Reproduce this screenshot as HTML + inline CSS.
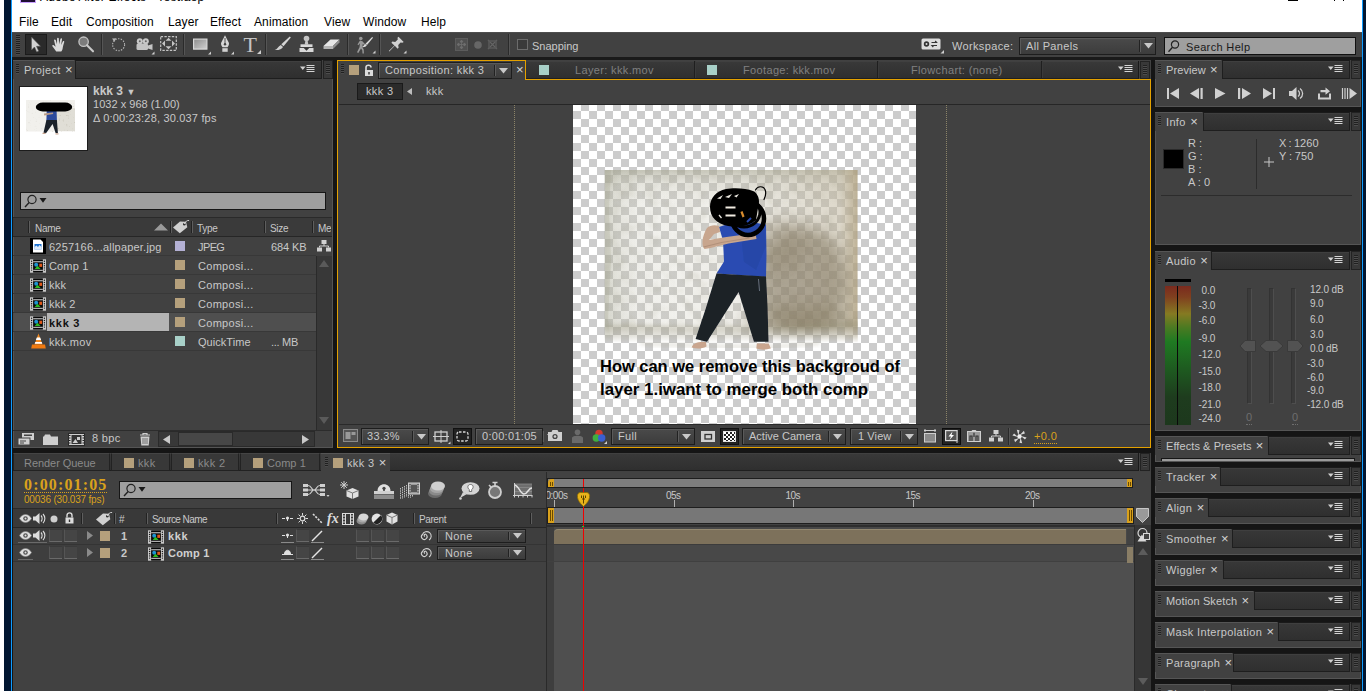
<!DOCTYPE html>
<html><head><meta charset="utf-8"><title>After Effects</title>
<style>
html,body{margin:0;padding:0}
body{width:1366px;height:691px;overflow:hidden;background:#fff;position:relative;font-family:"Liberation Sans",sans-serif;}
div,svg{position:absolute}
svg{overflow:visible}
.t{white-space:nowrap;line-height:14px;font-family:"Liberation Sans",sans-serif}
.w{letter-spacing:.35px}
.m{letter-spacing:.1px}
.x{font-size:13px;margin-left:1px;line-height:10px;color:#d4d4d4}
span{position:static}
</style></head>
<body>
<div style="left:0px;top:0px;width:4px;height:691px;background:#fff;"></div>
<div style="left:4px;top:0px;width:7px;height:691px;background:#021631;"></div>
<div style="left:11px;top:0px;width:1px;height:691px;background:#0f9cff;"></div>
<div style="left:1362px;top:0px;width:1px;height:691px;background:#0f9cff;"></div>
<div style="left:1363px;top:0px;width:3px;height:691px;background:#021631;"></div>
<div style="left:20px;top:0px;width:16px;height:3px;background:#1f0f33;border:1px solid #c9a0ff;border-top:none;box-sizing:border-box;"></div>
<div class="t" style="left:40px;top:-10.5px;font-size:12px;color:#000;letter-spacing:.2px;">Adobe After Effects - Test.aep</div>
<div style="left:1288px;top:0px;width:10px;height:1px;background:#000;"></div>
<div style="left:1334px;top:0px;width:1px;height:1px;background:#000;"></div>
<div style="left:1343px;top:0px;width:1px;height:1px;background:#000;"></div>
<div class="t m" style="left:19px;top:15px;font-size:12px;color:#000;">File</div>
<div class="t m" style="left:51px;top:15px;font-size:12px;color:#000;">Edit</div>
<div class="t m" style="left:86px;top:15px;font-size:12px;color:#000;">Composition</div>
<div class="t m" style="left:168px;top:15px;font-size:12px;color:#000;">Layer</div>
<div class="t m" style="left:210px;top:15px;font-size:12px;color:#000;">Effect</div>
<div class="t m" style="left:254px;top:15px;font-size:12px;color:#000;">Animation</div>
<div class="t m" style="left:324px;top:15px;font-size:12px;color:#000;">View</div>
<div class="t m" style="left:363px;top:15px;font-size:12px;color:#000;">Window</div>
<div class="t m" style="left:421px;top:15px;font-size:12px;color:#000;">Help</div>
<div style="left:12px;top:32px;width:1350px;height:25px;background:#414141;border-top:1px solid #4e4e4e;box-sizing:border-box;"></div>
<div style="left:12px;top:57px;width:1350px;height:3px;background:#1a1a1a;"></div>
<div style="left:16px;top:35px;width:4px;height:20px;background:repeating-linear-gradient(#202020 0 1px,#4c4c4c 1px 2px);"></div>
<div style="left:25px;top:34px;width:22px;height:21px;background:#2a2a2a;border:1px solid #1b1b1b;box-sizing:border-box;"></div>
<svg style="left:30px;top:36px;" width="12" height="17" viewBox="0 0 12 17"><path d="M1.5 1v13l3-3 2.2 5 2-.9-2.2-4.8h4z" fill="#d2d2d2" stroke="#555" stroke-width=".6"/></svg>
<svg style="left:52px;top:37px;" width="16" height="15" viewBox="0 0 16 15"><path d="M4.200 14.500c-1.200-2-2.700-3.600-3.800-5.300-.5-.9.500-1.700 1.400-1l1.800 1.600-1.500-6.300c-.3-1.100 1.200-1.500 1.600-.4l1.300 4.200.1-5.800c0-1.100 1.700-1.100 1.700 0l.3 5.700 1.300-5.200c.3-1.100 1.800-.7 1.600.4l-.9 5.600 1.700-3.500c.5-1 1.800-.4 1.400.7-1 3-1.200 4.200-1.600 6.500-.2 1.300-.7 2-1.400 2.800z" fill="#dadada"/></svg>
<svg style="left:77px;top:36px;" width="18" height="17" viewBox="0 0 18 17"><circle cx="6.600" cy="5.700" r="4.700" fill="#7c7c7c" stroke="#c4c4c4" stroke-width="1.300"/><path d="M10 9.300l6 6" stroke="#c9c9c9" stroke-width="2.100" stroke-linecap="round"/></svg>
<div style="left:101px;top:34px;width:1px;height:21px;background:#2a2a2a;box-shadow:1px 0 0 #555;"></div>
<svg style="left:110px;top:36px;" width="17" height="17" viewBox="0 0 17 17"><circle cx="8.600" cy="8.700" r="6" fill="none" stroke="#b4b4b4" stroke-width="1.100" stroke-dasharray="1.400 1.300"/><path d="M2 2.500l4.200-.3-1.700 3.800z" fill="#b4b4b4"/></svg>
<svg style="left:135px;top:38px;" width="20" height="17" viewBox="0 0 20 17"><circle cx="4.800" cy="3.200" r="3" fill="#c9c9c9"/><circle cx="10.800" cy="3.200" r="3" fill="#c9c9c9"/><rect x="1.500" y="5.500" width="11.500" height="6.500" rx="1.500" fill="#c4c4c4"/><path d="M13 7.500l4.500-1.500v6l-4.500-1.500z" fill="#c4c4c4"/><circle cx="4.800" cy="3.200" r="1" fill="#666"/><circle cx="10.800" cy="3.200" r="1" fill="#666"/><path d="M19.500 13.500v3h-3z" fill="#cfcfcf"/></svg>
<svg style="left:160px;top:36px;" width="17" height="15" viewBox="0 0 17 15"><rect x=".7" y=".7" width="15.600" height="13.600" fill="none" stroke="#c4c4c4" stroke-width="1.200" stroke-dasharray="2.400 1.300"/><path d="M8.500 1.800l3 3h-6zM8.500 13.200l3-3h-6zM2 7.500l3-3v6zM15 7.500l-3-3v6z" fill="#c4c4c4"/></svg>
<div style="left:183px;top:34px;width:1px;height:21px;background:#2a2a2a;box-shadow:1px 0 0 #555;"></div>
<svg style="left:193px;top:38px;" width="19" height="17" viewBox="0 0 19 17"><defs><linearGradient id="rg" x1="0" y1="0" x2="1" y2="1"><stop offset="0" stop-color="#8c8c8c"/><stop offset="1" stop-color="#d0d0d0"/></linearGradient></defs><rect x=".6" y="1.100" width="13.300" height="10" fill="url(#rg)" stroke="#d8d8d8" stroke-width="1.200"/><path d="M18 13.500v3h-3z" fill="#cfcfcf"/></svg>
<svg style="left:218px;top:35px;" width="17" height="20" viewBox="0 0 17 20"><path d="M7 .3l3.800 7.500c.5 1.300 0 2.500-1.300 4.500h-5c-1.300-2-1.800-3.200-1.300-4.500z" fill="#d8d8d8"/><path d="M7 3v6" stroke="#444" stroke-width=".9"/><circle cx="7" cy="9.300" r="1.200" fill="#444"/><rect x="4.300" y="13.200" width="5.400" height="3.600" fill="#d0d0d0"/><path d="M16 16.500v3h-3z" fill="#cfcfcf"/></svg>
<div class="t" style="left:243.5px;top:34px;font-size:22px;color:#c4c4c4;font-family:'Liberation Serif',serif;line-height:22px">T</div>
<svg style="left:257px;top:50px;" width="4" height="4" viewBox="0 0 4 4"><path d="M4 0v4h-4z" fill="#cfcfcf"/></svg>
<div style="left:265px;top:34px;width:1px;height:21px;background:#2a2a2a;box-shadow:1px 0 0 #555;"></div>
<svg style="left:274px;top:36px;" width="18" height="16" viewBox="0 0 18 16"><path d="M15.800 .6l1 1-7.300 8.600-2.200-2z" fill="#d6d6d6"/><path d="M6.800 8.900l2.200 2c-1 2.200-3.800 3.300-8.300 3.100 2.600-.8 3.500-3.700 6.100-5.100z" fill="#d0d0d0"/></svg>
<svg style="left:299px;top:35px;" width="16" height="18" viewBox="0 0 16 18"><circle cx="7.500" cy="3.500" r="2.800" fill="#c4c4c4"/><path d="M6.300 6h2.400l.6 3.500h-3.600z" fill="#c4c4c4"/><rect x="1.500" y="9.300" width="12" height="2.700" fill="#d8d8d8"/><path d="M.5 13h14v4h-14z" fill="#d8d8d8"/><path d="M4.500 12.700l3 3 3-3z" fill="#333"/></svg>
<svg style="left:323px;top:39px;" width="17" height="11" viewBox="0 0 17 11"><path d="M7.500 .5h9l-6.500 6.500h-9.500z" fill="#e6e6e6"/><path d="M.5 7h9.500v3h-9.500z" fill="#b4b4b4"/><path d="M10 7l6.500-6.500v3l-6.500 6.500z" fill="#8e8e8e"/></svg>
<div style="left:347px;top:34px;width:1px;height:21px;background:#2a2a2a;box-shadow:1px 0 0 #555;"></div>
<svg style="left:355px;top:36px;" width="21" height="18" viewBox="0 0 21 18"><circle cx="5.800" cy="2.500" r="1.800" fill="#9a9a9a"/><path d="M5 4.500l-2.500 4 .8.800 1.700-2-.5 4-2.500 5 1.300.6 2.700-4.500 1.300 1.800.2 3.200h1.400l-.2-4-1.400-2.500.5-3 1.500 1 .6-.9-2.500-2.800z" fill="#9a9a9a"/><path d="M17.200 1l.8.700-6 7.300-1.500-1.200z" fill="#dcdcdc"/><path d="M10.300 8l1.500 1.300c-.8 1.500-2.500 2-5 1.800 1.500-.5 2-2.300 3.500-3.100z" fill="#dcdcdc"/><path d="M20.500 14.500v3h-3z" fill="#cfcfcf"/></svg>
<div style="left:379px;top:34px;width:1px;height:21px;background:#2a2a2a;box-shadow:1px 0 0 #555;"></div>
<svg style="left:388px;top:36px;" width="19" height="18" viewBox="0 0 19 18"><path d="M10.500 .8l5.200 5.200-1.300.8-1.800-.4-2.400 2.600.4 2.800-1 1-2.800-3-5.500 5.700-.5-.5 5.600-5.600-3-2.700 1-1.100 2.800.4 2.600-2.500-.3-1.800z" fill="#d0d0d0"/><path d="M18.500 14.500v3h-3z" fill="#cfcfcf"/></svg>
<svg style="left:455px;top:38px;" width="13" height="13" viewBox="0 0 13 13"><rect x=".5" y=".5" width="12" height="12" fill="#505050" stroke="#5c5c5c"/><path d="M6.500 2v9M2 6.500h9M6.500 2l-1.500 2h3zM6.500 11l-1.500-2h3zM2 6.500l2-1.500v3zM11 6.500l-2-1.500v3z" stroke="#6e6e6e" fill="#6e6e6e" stroke-width=".8"/></svg>
<svg style="left:473px;top:40px;" width="10" height="10" viewBox="0 0 10 10"><circle cx="5" cy="5" r="3.800" fill="#666"/></svg>
<svg style="left:486px;top:38px;" width="13" height="13" viewBox="0 0 13 13"><path d="M2 2l9 9M11 2l-9 9" stroke="#646464" stroke-width="1.200"/><path d="M3 3h7v7h-7z" fill="none" stroke="#5a5a5a" stroke-width="1.500"/></svg>
<div style="left:508px;top:34px;width:1px;height:21px;background:#2a2a2a;box-shadow:1px 0 0 #555;"></div>
<div style="left:517px;top:39px;width:11px;height:11px;background:#3a3a3a;border:1px solid #6c6c6c;box-sizing:border-box;"></div>
<div class="t" style="left:532px;top:39px;font-size:11px;color:#c8c8c8;">Snapping</div>
<svg style="left:921px;top:38px;" width="24" height="16" viewBox="0 0 24 16"><rect x=".5" y=".5" width="19" height="11" rx="1.500" fill="#dcdcdc"/><circle cx="5.500" cy="6" r="2.700" fill="#333"/><circle cx="5.500" cy="6" r="1" fill="#dcdcdc"/><path d="M10.500 4.500h5l-1.300-1.500M16 7.500h-5l1.300 1.500" stroke="#333" stroke-width="1.200" fill="none"/><path d="M23 12v3.500h-3.500z" fill="#cfcfcf"/></svg>
<div class="t w" style="left:952px;top:39px;font-size:11px;color:#c8c8c8;">Workspace:</div>
<div style="left:1019px;top:37px;width:137px;height:18px;background:linear-gradient(#4a4a4a,#3c3c3c);border:1px solid #1d1d1d;box-sizing:border-box;box-shadow:inset 1px 1px 0 #5a5a5a;"></div>
<div style="left:1139px;top:40px;width:1px;height:12px;background:#222;box-shadow:1px 0 0 #5c5c5c;"></div>
<svg style="left:1144px;top:43px;" width="9" height="6" viewBox="0 0 9 6"><path d="M0 0h9l-4.500 5.500z" fill="#c8c8c8"/></svg>
<div class="t" style="left:1026px;top:39px;font-size:11px;color:#c8c8c8;letter-spacing:0.35px">All Panels</div>
<div style="left:1164px;top:37px;width:192px;height:18px;background:#9f9f9f;border:1px solid #111;box-sizing:border-box;"></div>
<svg style="left:1167px;top:39px;" width="14" height="14" viewBox="0 0 14 14"><circle cx="8" cy="5.500" r="3.600" fill="none" stroke="#222" stroke-width="1.200"/><path d="M5.500 8.300l-4 4.500" stroke="#222" stroke-width="1.300"/></svg>
<div class="t w" style="left:1186px;top:39.5px;font-size:11px;color:#1a1a1a;">Search Help</div>
<div style="left:12px;top:60px;width:1350px;height:631px;background:#151515;"></div>
<div style="left:13px;top:60px;width:320px;height:388px;background:#414141;box-shadow:inset 1px 0 0 #555,inset 0 -1px 0 #555,inset -1px 0 0 #555;"></div>
<div style="left:75px;top:60px;width:247px;height:19px;background:linear-gradient(#383838,#2f2f2f);border:1px solid #1e1e1e;border-top-color:#1a1a1a;box-sizing:border-box;box-shadow:inset 0 1px 0 #3f3f3f;"></div>
<div style="left:323px;top:60px;width:10px;height:19px;background:#383838;border:1px solid #222;box-sizing:border-box;"></div>
<div style="left:326px;top:64px;width:4px;height:10px;background:repeating-linear-gradient(#202020 0 1px,#4c4c4c 1px 2px);"></div>
<div style="left:13px;top:60px;width:61px;height:19px;background:#414141;border-top:1px solid #555;box-sizing:border-box;"></div>
<div style="left:16px;top:64px;width:3px;height:10px;background:repeating-linear-gradient(#202020 0 1px,#4c4c4c 1px 2px);"></div>
<div class="t" style="left:24px;top:63px;font-size:11px;color:#c8c8c8;letter-spacing:0.35px">Project <span class="x">×</span></div>
<svg style="left:300px;top:65px;" width="15" height="8" viewBox="0 0 15 8"><path d="M0 1.500h5.600l-2.800 3.500z" fill="#d0d0d0"/><path d="M6.500 .5h8M6.500 2.500h8M6.500 4.500h8M6.500 6.500h8" stroke="#d4d4d4" stroke-width="1"/></svg>
<div style="left:19px;top:86px;width:69px;height:65px;background:#fff;border:1px solid #1c1c1c;box-sizing:border-box;"></div>
<svg style="left:21px;top:88px" width="66" height="62" viewBox="0 0 66 62">
<defs><filter id="tb"><feGaussianBlur stdDeviation=".6"/></filter>
<filter id="tn" x="0" y="0" width="100%" height="100%" color-interpolation-filters="sRGB"><feTurbulence type="fractalNoise" baseFrequency=".55" numOctaves="2" seed="3"/><feColorMatrix values="0 0 0 0 .72  0 0 0 0 .7  0 0 0 0 .64  1.400 1 0 0 -1.400"/></filter></defs>
<rect x="5" y="12" width="49" height="31.500" fill="#f1f0ec" filter="url(#tb)"/>
<rect x="34" y="20" width="20" height="23" fill="#dad7ce" opacity=".7" filter="url(#tb)"/>
<rect x="30" y="14" width="24" height="29.500" filter="url(#tn)"/><rect x="5" y="12" width="25" height="31.500" filter="url(#tn)" opacity=".4"/>
<path d="M25.700 23h9.900l.3 9.500h-10.500z" fill="#2c4a9c"/>
<path d="M25.400 32h10.500l1 13h-2.300l-3-9-6.600 9.300-2.500-.6z" fill="#1b222a"/>
<path d="M23 25.500l9-1 .2 1.500-9 1.500z" fill="#b89a86"/>
<rect x="14.800" y="14.600" width="36.400" height="8.800" rx="7" ry="4.400" fill="#000"/>
<path d="M21.500 45.300h3M34.500 45.800h3" stroke="#c9a58f" stroke-width="1.200"/>
</svg>
<div class="t" style="left:93px;top:84px;font-size:12px;color:#c8c8c8;"><b>kkk 3</b> <span style="font-size:9px">▼</span></div>
<div class="t" style="left:93px;top:97px;font-size:11px;color:#c8c8c8;letter-spacing:.03px">1032 x 968 (1.00)</div>
<div class="t" style="left:93px;top:110.5px;font-size:11px;color:#c8c8c8;letter-spacing:.18px">Δ 0:00:23:28, 30.037 fps</div>
<div style="left:20px;top:192px;width:306px;height:18px;background:#9f9f9f;border:1px solid #161616;box-sizing:border-box;"></div>
<svg style="left:24px;top:194px;" width="24" height="14" viewBox="0 0 24 14"><circle cx="8" cy="5.500" r="4.100" fill="none" stroke="#222" stroke-width="1.200"/><path d="M5.200 8.500l-4.200 4.500" stroke="#222" stroke-width="1.400"/><path d="M15.500 4h7l-3.500 4.800z" fill="#1a1a1a"/></svg>
<div style="left:13px;top:217px;width:319px;height:1px;background:#2a2a2a;"></div>
<div style="left:13px;top:218px;width:319px;height:18px;background:#3a3a3a;"></div>
<div style="left:13px;top:236px;width:319px;height:1px;background:#262626;"></div>
<div style="left:28px;top:221px;width:1px;height:12px;background:#222;box-shadow:1px 0 0 #5e5e5e;"></div>
<div class="t" style="left:35px;top:221.5px;font-size:10px;color:#c8c8c8;letter-spacing:-.3px">Name</div>
<svg style="left:154px;top:223px;" width="14" height="8" viewBox="0 0 14 8"><path d="M0 7.500l7-7 7 7z" fill="#9a9a9a"/></svg>
<div style="left:170px;top:221px;width:1px;height:12px;background:#222;box-shadow:1px 0 0 #5e5e5e;"></div>
<svg style="left:172px;top:219px;" width="18" height="15" viewBox="0 0 18 15"><path d="M1 8.500l7-6 6 .3 1.300 5.500-7.500 6z" fill="#d0d0d0"/><circle cx="12.300" cy="5.200" r="1.300" fill="#333"/><path d="M12.300 5c1-2.500 3-4 4.800-3.500" stroke="#d0d0d0" fill="none" stroke-width="1"/></svg>
<div style="left:191px;top:221px;width:1px;height:12px;background:#222;box-shadow:1px 0 0 #5e5e5e;"></div>
<div class="t" style="left:197px;top:221.5px;font-size:10px;color:#c8c8c8;letter-spacing:-.3px">Type</div>
<div style="left:264px;top:221px;width:1px;height:12px;background:#222;box-shadow:1px 0 0 #5e5e5e;"></div>
<div class="t" style="left:270px;top:221.5px;font-size:10px;color:#c8c8c8;letter-spacing:-.3px">Size</div>
<div style="left:312px;top:221px;width:1px;height:12px;background:#222;box-shadow:1px 0 0 #5e5e5e;"></div>
<div class="t" style="left:318px;top:221.5px;font-size:10px;color:#c8c8c8;overflow:hidden;width:13px;letter-spacing:-.3px">Mec</div>
<div style="left:13px;top:255px;width:303px;height:1px;background:#383838;"></div>
<svg style="left:30px;top:238px;" width="16" height="16" viewBox="0 0 16 16"><rect width="16" height="16" fill="#000"/><path d="M3 1.500h7.500l2.500 2.500v10.500h-10z" fill="#fff"/><path d="M4.500 6h7v5.500h-7z" fill="#1f74d4"/><path d="M4.500 9l2-1.500 1.500 1.500 1.500-2 2 2v2.500h-7z" fill="#fff" opacity=".85"/></svg>
<div class="t" style="left:49px;top:240px;font-size:11px;color:#c8c8c8;letter-spacing:0.2px">6257166...allpaper.jpg</div>
<div style="left:175px;top:241px;width:10px;height:10px;background:#b3b0d4;"></div>
<div class="t" style="left:198px;top:240px;font-size:11px;color:#c8c8c8;letter-spacing:-0.6px">JPEG</div>
<div class="t" style="left:271px;top:240px;font-size:11px;color:#c8c8c8;letter-spacing:-0.1px">684 KB</div>
<div style="left:13px;top:274px;width:303px;height:1px;background:#383838;"></div>
<svg style="left:30px;top:258.5px;" width="16" height="14" viewBox="0 0 16 14"><rect x="0" y=".3" width="3.200" height="13.400" fill="#c9c9c9"/><rect x="12.800" y=".3" width="3.200" height="13.400" fill="#c9c9c9"/><rect x="3.200" y="1" width="9.600" height="12" fill="#080808"/><rect x="3.200" y="2.200" width="9.600" height="1.100" fill="#c4c4c4"/><rect x="3.200" y="10.800" width="9.600" height="1.100" fill="#c4c4c4"/><g fill="#1a1a1a"><circle cx="1.600" cy="2.300" r=".7"/><circle cx="1.600" cy="4.500" r=".7"/><circle cx="1.600" cy="6.700" r=".7"/><circle cx="1.600" cy="8.900" r=".7"/><circle cx="1.600" cy="11.100" r=".7"/><circle cx="14.400" cy="2.300" r=".7"/><circle cx="14.400" cy="4.500" r=".7"/><circle cx="14.400" cy="6.700" r=".7"/><circle cx="14.400" cy="8.900" r=".7"/><circle cx="14.400" cy="11.100" r=".7"/></g><circle cx="6.200" cy="5.800" r="2" fill="#1e93d2"/><rect x="9.300" y="4.700" width="2.800" height="3.200" fill="#e0581a"/><path d="M4.600 9.900l3-3.200 3 3.200z" fill="#2dbb22"/></svg>
<div class="t" style="left:49px;top:259px;font-size:11px;color:#c8c8c8;letter-spacing:0.15px">Comp 1</div>
<div style="left:175px;top:260px;width:10px;height:10px;background:#b5a07c;"></div>
<div class="t" style="left:198px;top:259px;font-size:11px;color:#c8c8c8;letter-spacing:0.3px">Composi...</div>
<div style="left:13px;top:293px;width:303px;height:1px;background:#383838;"></div>
<svg style="left:30px;top:277.5px;" width="16" height="14" viewBox="0 0 16 14"><rect x="0" y=".3" width="3.200" height="13.400" fill="#c9c9c9"/><rect x="12.800" y=".3" width="3.200" height="13.400" fill="#c9c9c9"/><rect x="3.200" y="1" width="9.600" height="12" fill="#080808"/><rect x="3.200" y="2.200" width="9.600" height="1.100" fill="#c4c4c4"/><rect x="3.200" y="10.800" width="9.600" height="1.100" fill="#c4c4c4"/><g fill="#1a1a1a"><circle cx="1.600" cy="2.300" r=".7"/><circle cx="1.600" cy="4.500" r=".7"/><circle cx="1.600" cy="6.700" r=".7"/><circle cx="1.600" cy="8.900" r=".7"/><circle cx="1.600" cy="11.100" r=".7"/><circle cx="14.400" cy="2.300" r=".7"/><circle cx="14.400" cy="4.500" r=".7"/><circle cx="14.400" cy="6.700" r=".7"/><circle cx="14.400" cy="8.900" r=".7"/><circle cx="14.400" cy="11.100" r=".7"/></g><circle cx="6.200" cy="5.800" r="2" fill="#1e93d2"/><rect x="9.300" y="4.700" width="2.800" height="3.200" fill="#e0581a"/><path d="M4.600 9.900l3-3.200 3 3.200z" fill="#2dbb22"/></svg>
<div class="t" style="left:49px;top:278px;font-size:11px;color:#c8c8c8;letter-spacing:0.2px">kkk</div>
<div style="left:175px;top:279px;width:10px;height:10px;background:#b5a07c;"></div>
<div class="t" style="left:198px;top:278px;font-size:11px;color:#c8c8c8;letter-spacing:0.3px">Composi...</div>
<div style="left:13px;top:312px;width:303px;height:1px;background:#383838;"></div>
<svg style="left:30px;top:296.5px;" width="16" height="14" viewBox="0 0 16 14"><rect x="0" y=".3" width="3.200" height="13.400" fill="#c9c9c9"/><rect x="12.800" y=".3" width="3.200" height="13.400" fill="#c9c9c9"/><rect x="3.200" y="1" width="9.600" height="12" fill="#080808"/><rect x="3.200" y="2.200" width="9.600" height="1.100" fill="#c4c4c4"/><rect x="3.200" y="10.800" width="9.600" height="1.100" fill="#c4c4c4"/><g fill="#1a1a1a"><circle cx="1.600" cy="2.300" r=".7"/><circle cx="1.600" cy="4.500" r=".7"/><circle cx="1.600" cy="6.700" r=".7"/><circle cx="1.600" cy="8.900" r=".7"/><circle cx="1.600" cy="11.100" r=".7"/><circle cx="14.400" cy="2.300" r=".7"/><circle cx="14.400" cy="4.500" r=".7"/><circle cx="14.400" cy="6.700" r=".7"/><circle cx="14.400" cy="8.900" r=".7"/><circle cx="14.400" cy="11.100" r=".7"/></g><circle cx="6.200" cy="5.800" r="2" fill="#1e93d2"/><rect x="9.300" y="4.700" width="2.800" height="3.200" fill="#e0581a"/><path d="M4.600 9.900l3-3.200 3 3.200z" fill="#2dbb22"/></svg>
<div class="t" style="left:49px;top:297px;font-size:11px;color:#c8c8c8;letter-spacing:0.2px">kkk 2</div>
<div style="left:175px;top:298px;width:10px;height:10px;background:#b5a07c;"></div>
<div class="t" style="left:198px;top:297px;font-size:11px;color:#c8c8c8;letter-spacing:0.3px">Composi...</div>
<div style="left:13px;top:313px;width:303px;height:18px;background:#4f4f4f;"></div>
<div style="left:47px;top:313px;width:122px;height:18px;background:#b4b4b4;"></div>
<div style="left:13px;top:331px;width:303px;height:1px;background:#383838;"></div>
<svg style="left:30px;top:315.5px;" width="16" height="14" viewBox="0 0 16 14"><rect x="0" y=".3" width="3.200" height="13.400" fill="#c9c9c9"/><rect x="12.800" y=".3" width="3.200" height="13.400" fill="#c9c9c9"/><rect x="3.200" y="1" width="9.600" height="12" fill="#080808"/><rect x="3.200" y="2.200" width="9.600" height="1.100" fill="#c4c4c4"/><rect x="3.200" y="10.800" width="9.600" height="1.100" fill="#c4c4c4"/><g fill="#1a1a1a"><circle cx="1.600" cy="2.300" r=".7"/><circle cx="1.600" cy="4.500" r=".7"/><circle cx="1.600" cy="6.700" r=".7"/><circle cx="1.600" cy="8.900" r=".7"/><circle cx="1.600" cy="11.100" r=".7"/><circle cx="14.400" cy="2.300" r=".7"/><circle cx="14.400" cy="4.500" r=".7"/><circle cx="14.400" cy="6.700" r=".7"/><circle cx="14.400" cy="8.900" r=".7"/><circle cx="14.400" cy="11.100" r=".7"/></g><circle cx="6.200" cy="5.800" r="2" fill="#1e93d2"/><rect x="9.300" y="4.700" width="2.800" height="3.200" fill="#e0581a"/><path d="M4.600 9.900l3-3.200 3 3.200z" fill="#2dbb22"/></svg>
<div class="t" style="left:49px;top:316px;font-size:11px;color:#111;letter-spacing:0.7px"><b>kkk 3</b></div>
<div style="left:175px;top:317px;width:10px;height:10px;background:#b5a07c;"></div>
<div class="t" style="left:198px;top:316px;font-size:11px;color:#c8c8c8;letter-spacing:0.3px">Composi...</div>
<div style="left:13px;top:350px;width:303px;height:1px;background:#383838;"></div>
<svg style="left:31px;top:333px;" width="15" height="16" viewBox="0 0 15 16"><path d="M7.500 .5l4 11h-8z" fill="#f58a1f"/><path d="M5.800 4.500h3.400l.9 2.500h-5.200zM4.300 9h6.400l.6 1.800h-7.600z" fill="#fff"/><path d="M1 11.500h13l.8 4h-14.600z" fill="#f07a10"/></svg>
<div class="t" style="left:49px;top:335px;font-size:11px;color:#c8c8c8;letter-spacing:0.3px">kkk.mov</div>
<div style="left:175px;top:336px;width:10px;height:10px;background:#a8d0c8;"></div>
<div class="t" style="left:198px;top:335px;font-size:11px;color:#c8c8c8;letter-spacing:0.05px">QuickTime</div>
<div class="t" style="left:271px;top:335px;font-size:11px;color:#c8c8c8;letter-spacing:-0.3px">... MB</div>
<div style="left:316px;top:237px;width:16px;height:193px;background:#383838;border-left:1px solid #2a2a2a;box-sizing:border-box;"></div>
<div style="left:316px;top:237px;width:16px;height:19px;background:#414141;"></div>
<svg style="left:317px;top:240px;" width="14" height="12" viewBox="0 0 14 12"><rect x="4.500" y="0" width="5" height="4" fill="#d0d0d0"/><rect x="0" y="7.500" width="5" height="4" fill="#d0d0d0"/><rect x="9" y="7.500" width="5" height="4" fill="#d0d0d0"/><path d="M7 4v2M2.500 7.500v-1.500h9v1.500" stroke="#d0d0d0" fill="none"/></svg>
<svg style="left:319px;top:260px;" width="10" height="7" viewBox="0 0 10 7"><path d="M0 7l5-7 5 7z" fill="#5a5a5a"/></svg>
<svg style="left:319px;top:417px;" width="10" height="7" viewBox="0 0 10 7"><path d="M0 0l5 7 5-7z" fill="#5a5a5a"/></svg>
<div style="left:13px;top:430px;width:319px;height:1px;background:#2c2c2c;"></div>
<svg style="left:18px;top:433px;" width="16" height="13" viewBox="0 0 16 13"><rect x="4" y="0" width="12" height="7" fill="#cfcfcf"/><rect x="6" y="1.500" width="8" height="1.500" fill="#444"/><rect x="0" y="5" width="12" height="7" fill="#cfcfcf" stroke="#424242" stroke-width="1"/><path d="M2 8h6M2 10h4" stroke="#444"/></svg>
<svg style="left:43px;top:434px;" width="15" height="11" viewBox="0 0 15 11"><path d="M0 2.500h1l1-2h5l1 2h7v8.500h-15z" fill="#cfcfcf"/></svg>
<svg style="left:68px;top:433px;" width="17" height="13" viewBox="0 0 17 13"><rect x=".5" y=".5" width="16" height="12" fill="#cfcfcf" stroke="#2a2a2a"/><rect x="3.500" y="2" width="10" height="9" fill="#333"/><path d="M1 2.500h1.500M1 5h1.500M1 7.500h1.500M1 10h1.500M14.500 2.500h1.500M14.500 5h1.500M14.500 7.500h1.500M14.500 10h1.500" stroke="#222" stroke-width="1.200"/><path d="M4.500 10l3-4 2.500 4z" fill="#cfcfcf"/><rect x="9" y="4" width="3" height="3" fill="#cfcfcf"/></svg>
<div class="t w" style="left:92px;top:431px;font-size:11px;color:#c8c8c8;">8 bpc</div>
<svg style="left:139px;top:432px;" width="12" height="14" viewBox="0 0 12 14"><path d="M1 3h10M4 3v-1.500h4v1.500" stroke="#cfcfcf" fill="none" stroke-width="1.200"/><path d="M1.500 4.500h9l-.8 9h-7.400z" fill="#cfcfcf"/><path d="M4 6v6M6 6v6M8 6v6" stroke="#555" stroke-width=".8"/></svg>
<div style="left:158px;top:431px;width:157px;height:16px;background:#383838;border:1px solid #2a2a2a;box-sizing:border-box;"></div>
<svg style="left:163px;top:435px;" width="7" height="9" viewBox="0 0 7 9"><path d="M7 0v9l-7-4.500z" fill="#c8c8c8"/></svg>
<svg style="left:302px;top:435px;" width="7" height="9" viewBox="0 0 7 9"><path d="M0 0v9l7-4.500z" fill="#c8c8c8"/></svg>
<div style="left:178px;top:432px;width:55px;height:14px;background:#474747;border:1px solid #2a2a2a;box-sizing:border-box;"></div>
<div style="left:337px;top:60px;width:814px;height:388px;background:#414141;"></div>
<div style="left:526px;top:61px;width:613px;height:18px;background:linear-gradient(#393939,#2f2f2f);border-bottom:1px solid #1f1f1f;border-right:1px solid #1a1a1a;box-sizing:border-box;box-shadow:inset 0 1px 0 #404040;"></div>
<div style="left:694px;top:61px;width:1px;height:17px;background:#1f1f1f;box-shadow:1px 0 0 #3a3a3a;"></div>
<div style="left:877px;top:61px;width:1px;height:17px;background:#1f1f1f;box-shadow:1px 0 0 #3a3a3a;"></div>
<div style="left:1041px;top:61px;width:1px;height:17px;background:#1f1f1f;box-shadow:1px 0 0 #3a3a3a;"></div>
<div style="left:539px;top:65px;width:10px;height:10px;background:#a8d0c8;"></div>
<div class="t w" style="left:575px;top:63px;font-size:11px;color:#808080;">Layer: kkk.mov</div>
<div style="left:707px;top:65px;width:10px;height:10px;background:#a8d0c8;"></div>
<div class="t w" style="left:743px;top:63px;font-size:11px;color:#808080;">Footage: kkk.mov</div>
<div class="t w" style="left:911px;top:63px;font-size:11px;color:#808080;">Flowchart: (none)</div>
<svg style="left:1118px;top:65px;" width="15" height="8" viewBox="0 0 15 8"><path d="M0 1.500h5.600l-2.800 3.500z" fill="#d0d0d0"/><path d="M6.500 .5h8M6.500 2.500h8M6.500 4.500h8M6.500 6.500h8" stroke="#d4d4d4" stroke-width="1"/></svg>
<div style="left:1140px;top:61px;width:10px;height:18px;background:#383838;border:1px solid #222;box-sizing:border-box;"></div>
<div style="left:1143px;top:65px;width:4px;height:10px;background:repeating-linear-gradient(#202020 0 1px,#4c4c4c 1px 2px);"></div>
<div style="left:341px;top:64px;width:3px;height:10px;background:repeating-linear-gradient(#202020 0 1px,#4c4c4c 1px 2px);"></div>
<div style="left:349px;top:65px;width:10px;height:10px;background:#b5a07c;"></div>
<svg style="left:364px;top:64px;" width="10" height="12" viewBox="0 0 10 12"><path d="M2 6v-2.500c0-3 5-3 5 0" fill="none" stroke="#dcdcdc" stroke-width="1.600"/><rect x="1" y="6" width="8" height="6" fill="#dcdcdc"/><rect x="4.300" y="8" width="1.400" height="2.500" fill="#333"/></svg>
<div style="left:378px;top:62px;width:134px;height:17px;background:linear-gradient(#4a4a4a,#3c3c3c);border:1px solid #1d1d1d;box-sizing:border-box;box-shadow:inset 1px 1px 0 #5a5a5a;"></div>
<div style="left:494px;top:65px;width:1px;height:11px;background:#222;box-shadow:1px 0 0 #5c5c5c;"></div>
<svg style="left:499px;top:68px;" width="9" height="6" viewBox="0 0 9 6"><path d="M0 0h9l-4.500 5.500z" fill="#c8c8c8"/></svg>
<div class="t" style="left:385px;top:63px;font-size:11px;color:#c8c8c8;letter-spacing:0.35px">Composition: kkk 3</div>
<div class="t" style="left:516px;top:63px;font-size:13px;color:#d8d8d8;">×</div>
<div style="left:357px;top:83px;width:46px;height:17px;background:#2b2b2b;border:1px solid #1a1a1a;box-sizing:border-box;"></div>
<div class="t w" style="left:366px;top:84px;font-size:11px;color:#c8c8c8;">kkk 3</div>
<svg style="left:407px;top:88px;" width="5" height="7" viewBox="0 0 5 7"><path d="M5 0v7l-5-3.500z" fill="#bdbdbd"/></svg>
<div class="t w" style="left:426px;top:84px;font-size:11px;color:#c8c8c8;">kkk</div>
<div style="left:339px;top:104px;width:811px;height:1px;background:#262626;"></div>
<div style="left:514px;top:105px;width:1px;height:319px;background:repeating-linear-gradient(#8c8468 0 1px,transparent 1px 2px);"></div>
<div style="left:946px;top:105px;width:1px;height:319px;background:repeating-linear-gradient(#8c8468 0 1px,transparent 1px 2px);"></div>
<div style="left:573px;top:105px;width:343px;height:319px;background:#fff;background-image:conic-gradient(#ccc 25%,#fff 0 50%,#ccc 0 75%,#fff 0);background-size:16px 16px;background-position:0 -2px;overflow:hidden;">
<svg style="left:0;top:0" width="343" height="319" viewBox="573 105 343 319">
<defs>
<filter id="b2" x="-20%" y="-20%" width="140%" height="140%"><feGaussianBlur stdDeviation="2"/></filter>
<filter id="b1" x="-20%" y="-20%" width="140%" height="140%"><feGaussianBlur stdDeviation=".7"/></filter>
<filter id="b05" x="-20%" y="-20%" width="140%" height="140%"><feGaussianBlur stdDeviation=".45"/></filter>
<filter id="b6" x="-40%" y="-40%" width="180%" height="180%"><feGaussianBlur stdDeviation="8"/></filter>
<filter id="nz" x="0" y="0" width="100%" height="100%" color-interpolation-filters="sRGB"><feTurbulence type="fractalNoise" baseFrequency=".085" numOctaves="3" seed="7"/><feColorMatrix values="0 0 0 0 .63  0 0 0 0 .62  0 0 0 0 .54  .9 .5 0 0 -.66"/><feGaussianBlur stdDeviation=".8"/></filter>
<linearGradient id="wl" x1="0" x2="1"><stop offset="0" stop-color="#9fa08c" stop-opacity=".42"/><stop offset=".04" stop-color="#a9a996" stop-opacity=".26"/><stop offset=".14" stop-color="#bcbbab" stop-opacity=".06"/><stop offset=".3" stop-color="#c6c4b6" stop-opacity="0"/></linearGradient>
<linearGradient id="wt" x1="0" y1="0" x2="0" y2="1"><stop offset="0" stop-color="#9c9c88" stop-opacity=".5"/><stop offset=".07" stop-color="#adac99" stop-opacity=".18"/><stop offset=".2" stop-color="#b5b29d" stop-opacity="0"/></linearGradient>
<linearGradient id="wr" x1="0" x2="1"><stop offset="0" stop-color="#b7ab90" stop-opacity="0"/><stop offset=".55" stop-color="#b7ab90" stop-opacity=".1"/><stop offset=".93" stop-color="#baad90" stop-opacity=".4"/><stop offset="1" stop-color="#b09f7c" stop-opacity=".75"/></linearGradient>
<linearGradient id="mg" x1="0" y1="0" x2="0" y2="1"><stop offset="0" stop-color="#fff"/><stop offset=".9" stop-color="#fff"/><stop offset=".955" stop-color="#fff" stop-opacity=".55"/><stop offset="1" stop-color="#fff" stop-opacity="0"/></linearGradient><mask id="wm" maskUnits="userSpaceOnUse" x="600" y="165" width="262" height="185"><rect x="604.500" y="170" width="253.500" height="173" fill="url(#mg)"/></mask>
</defs>
<g mask="url(#wm)">
<rect x="604.500" y="170" width="253" height="176" fill="#d6d4ca" opacity=".24"/>
<rect x="604.500" y="170" width="253" height="176" fill="url(#wl)"/>
<rect x="604.500" y="170" width="253" height="176" fill="url(#wt)"/>
<rect x="604.500" y="170" width="253" height="176" fill="url(#wr)"/>
<rect x="604.500" y="170" width="253" height="176" filter="url(#nz)" opacity=".45"/>
<ellipse cx="802" cy="282" rx="46" ry="56" fill="#7f735c" opacity=".56" filter="url(#b6)"/>
<ellipse cx="800" cy="322" rx="56" ry="16" fill="#857a60" opacity=".45" filter="url(#b6)"/>
<ellipse cx="778" cy="245" rx="24" ry="28" fill="#8a7f68" opacity=".34" filter="url(#b6)"/>
<path d="M604 326c30-4 70 2 100 0s60 4 90 0 50-4 66-6v30h-256z" fill="#8f8a70" opacity=".34" filter="url(#b2)"/>
<path d="M604 170h7l-2 40 2 50-3 60 4 26h-8z" fill="#9d9d88" opacity=".2" filter="url(#b1)"/>
</g>
<path d="M640 343c30 3 50 1 70 3l60 1 50-4" stroke="#a7a38c" stroke-width="3" opacity=".35" fill="none" filter="url(#b2)"/>
<!-- person -->
<g filter="url(#b05)">
<path d="M716.500 273.500l7.500-12-1-21-4-13.500 12-4 20-1 15 2.500 .500 30 -.500 22.500z" fill="#2a4cb2"/>
<path d="M740 226l16-3 8 3 2 20-10 24-12-8z" fill="#2443a0" opacity=".55"/>
<path d="M716.500 273.400l49.500 3 1.500 30 1 35.300h-14.500l-15.400-49.700-31.600 49.700-11.400-2.700 10-30z" fill="#1a2027"/>
<path d="M707 228c3-3 8-3.500 12-2l1 6-6 2-5 6 14-2.500 32.500-4.500 1 6-28 4.500-18 4.500-6 1c-3-3-3-12 2.500-21z" fill="#c8a68e"/>
<path d="M703.500 247l18-4.500 28-4.500" stroke="#a88770" stroke-width="1.200" fill="none" opacity=".7"/>
<path d="M691.700 347.500c1-4 5-6 14.300-5.500l.5 4.500c-5 2.500-10 2.500-14.800 1zM756.800 343.500h12l2 5c-5 1.500-10 1.500-14.500 0z" fill="#c9a58e"/>
<path d="M758.500 279l1 12" stroke="#8a94a0" stroke-width=".7"/>
</g>
<!-- scribble -->
<path d="M710 207c0-9 6-16 16-18 8-1.500 20-1 27 2 4 2 6 6 6 11l-3 18c-6 6-18 8-28 6-11-2-18-9-18-19z" fill="#000"/>
<g fill="none" stroke="#000" stroke-linecap="round">
<ellipse cx="748" cy="218.500" rx="16" ry="16.500" stroke-width="4.500"/>
<ellipse cx="744" cy="212" rx="16" ry="15" stroke-width="3"/>
<path d="M755.500 190c2-4 7.500-4.500 9.500-.5 1.500 3.500 .5 7-1 10" stroke-width="1.200"/>
</g>
<path d="M717 198.500l6-3.500-2.500 4zM725 197l7-3-3 4zM734 196l5-2-2.500 3.500z" fill="#e9e6de"/>
<path d="M725.500 207.500h10M725.500 215.500h10" stroke="#f1ece2" stroke-width="2.200"/>
<path d="M719 215l2.500 3" stroke="#e9e6de" stroke-width="1.300"/>
<path d="M741.500 211.500l2 5.500" stroke="#d98c2e" stroke-width="2.200"/>
<path d="M747 222l4-4" stroke="#2a4cb2" stroke-width="2"/>
<text x="600" y="371.700" font-family="Liberation Sans, sans-serif" font-weight="bold" font-size="17.300" fill="#000" textLength="300" lengthAdjust="spacingAndGlyphs">How can we remove this backgroud of</text>
<text x="600" y="394.600" font-family="Liberation Sans, sans-serif" font-weight="bold" font-size="17.300" fill="#000" textLength="268" lengthAdjust="spacingAndGlyphs">layer 1.iwant to merge both comp</text>
</svg></div>
<div style="left:339px;top:424px;width:811px;height:1px;background:#2a2a2a;"></div>
<svg style="left:343px;top:429px;" width="15" height="13" viewBox="0 0 15 13"><rect x=".5" y=".5" width="14" height="12" fill="#555" stroke="#8a8a8a"/><rect x="2.500" y="3" width="5" height="7" fill="#999"/><rect x="8.500" y="3" width="4" height="3" fill="#999"/></svg>
<div style="left:361px;top:428px;width:68px;height:17px;background:linear-gradient(#4a4a4a,#3c3c3c);border:1px solid #1d1d1d;box-sizing:border-box;box-shadow:inset 1px 1px 0 #5a5a5a;"></div>
<div style="left:412px;top:431px;width:1px;height:11px;background:#222;box-shadow:1px 0 0 #5c5c5c;"></div>
<svg style="left:417px;top:434px;" width="9" height="6" viewBox="0 0 9 6"><path d="M0 0h9l-4.500 5.500z" fill="#c8c8c8"/></svg>
<div class="t" style="left:367px;top:429px;font-size:11px;color:#c8c8c8;letter-spacing:0.35px">33.3%</div>
<svg style="left:433px;top:430px;" width="18" height="14" viewBox="0 0 18 14"><rect x="2" y="2" width="12" height="9" fill="none" stroke="#cfcfcf" stroke-width="1.300"/><path d="M8 0v13M0 6.500h16" stroke="#cfcfcf" stroke-width="1"/><path d="M17.500 11.500v2.500h-2.500z" fill="#cfcfcf"/></svg>
<div style="left:453px;top:428px;width:19px;height:17px;background:#222;border:1px solid #111;box-sizing:border-box;"></div>
<svg style="left:456px;top:431px;" width="13" height="11" viewBox="0 0 13 11"><rect x="1" y="1" width="11" height="9" rx="2" fill="none" stroke="#d8d8d8" stroke-width="1.300" stroke-dasharray="2.500 1.500"/></svg>
<div style="left:475px;top:428px;width:68px;height:17px;background:linear-gradient(#4a4a4a,#3c3c3c);border:1px solid #1d1d1d;box-sizing:border-box;box-shadow:inset 1px 1px 0 #5a5a5a;"></div>
<div style="left:542px;top:431px;width:1px;height:11px;background:#222;box-shadow:1px 0 0 #5c5c5c;"></div>
<svg style="left:547px;top:434px;" width="9" height="6" viewBox="0 0 9 6"><path d="M0 0h9l-4.500 5.500z" fill="#c8c8c8"/></svg>
<div class="t" style="left:482px;top:429px;font-size:11px;color:#c8c8c8;letter-spacing:0.3px">0:00:01:05</div>
<svg style="left:548px;top:430px;" width="14" height="11" viewBox="0 0 14 11"><path d="M0 2h3.500l1-2h5l1 2h3.500v9h-14z" fill="#cfcfcf"/><circle cx="7" cy="6.500" r="2.600" fill="#424242"/><circle cx="7" cy="6.500" r="1.300" fill="#cfcfcf"/></svg>
<svg style="left:572px;top:429px;" width="11" height="14" viewBox="0 0 11 14"><circle cx="5.500" cy="3.200" r="2.800" fill="#6a6a6a"/><path d="M0 14v-5c0-3 11-3 11 0v5z" fill="#6a6a6a"/></svg>
<svg style="left:592px;top:429px;" width="15" height="15" viewBox="0 0 15 15"><circle cx="7" cy="4.500" r="3.700" fill="#d23a2e"/><circle cx="4.300" cy="9" r="3.700" fill="#3fae3f"/><circle cx="9.700" cy="9" r="3.700" fill="#3b5fd0"/><path d="M15 12v3h-3z" fill="#cfcfcf"/></svg>
<div style="left:611px;top:428px;width:84px;height:17px;background:linear-gradient(#4a4a4a,#3c3c3c);border:1px solid #1d1d1d;box-sizing:border-box;box-shadow:inset 1px 1px 0 #5a5a5a;"></div>
<div style="left:677px;top:431px;width:1px;height:11px;background:#222;box-shadow:1px 0 0 #5c5c5c;"></div>
<svg style="left:682px;top:434px;" width="9" height="6" viewBox="0 0 9 6"><path d="M0 0h9l-4.500 5.500z" fill="#c8c8c8"/></svg>
<div class="t" style="left:618px;top:429px;font-size:11px;color:#c8c8c8;letter-spacing:0.35px">Full</div>
<svg style="left:701px;top:431px;" width="14" height="11" viewBox="0 0 14 11"><rect width="14" height="11" fill="#cfcfcf"/><rect x="4" y="3.500" width="6.500" height="4.500" fill="none" stroke="#333" stroke-width="1.300"/></svg>
<div style="left:720px;top:428px;width:19px;height:17px;background:#222;border:1px solid #111;box-sizing:border-box;"></div>
<div style="left:723px;top:431px;width:13px;height:11px;background:#fff;background-image:conic-gradient(#222 25%,#fff 0 50%,#222 0 75%,#fff 0);background-size:4px 4px;border:1px solid #ddd;box-sizing:border-box;"></div>
<div style="left:742px;top:428px;width:104px;height:17px;background:linear-gradient(#4a4a4a,#3c3c3c);border:1px solid #1d1d1d;box-sizing:border-box;box-shadow:inset 1px 1px 0 #5a5a5a;"></div>
<div style="left:828px;top:431px;width:1px;height:11px;background:#222;box-shadow:1px 0 0 #5c5c5c;"></div>
<svg style="left:833px;top:434px;" width="9" height="6" viewBox="0 0 9 6"><path d="M0 0h9l-4.500 5.500z" fill="#c8c8c8"/></svg>
<div class="t" style="left:749px;top:429px;font-size:11px;color:#c8c8c8;letter-spacing:0px">Active Camera</div>
<div style="left:850px;top:428px;width:68px;height:17px;background:linear-gradient(#4a4a4a,#3c3c3c);border:1px solid #1d1d1d;box-sizing:border-box;box-shadow:inset 1px 1px 0 #5a5a5a;"></div>
<div style="left:900px;top:431px;width:1px;height:11px;background:#222;box-shadow:1px 0 0 #5c5c5c;"></div>
<svg style="left:905px;top:434px;" width="9" height="6" viewBox="0 0 9 6"><path d="M0 0h9l-4.500 5.500z" fill="#c8c8c8"/></svg>
<div class="t" style="left:858px;top:429px;font-size:11px;color:#c8c8c8;letter-spacing:0.1px">1 View</div>
<svg style="left:924px;top:429px;" width="12" height="14" viewBox="0 0 12 14"><path d="M0 1.500h12M1 0v3M11 0v3" stroke="#cfcfcf" stroke-width="1"/><rect x=".5" y="4.500" width="11" height="8.500" fill="#8a8a8a" stroke="#cfcfcf"/></svg>
<div style="left:942px;top:428px;width:19px;height:17px;background:#222;border:1px solid #0c0c0c;box-sizing:border-box;"></div>
<svg style="left:945px;top:430px;" width="14" height="13" viewBox="0 0 14 13"><rect x=".6" y=".6" width="11.500" height="10" fill="#555" stroke="#d8d8d8" stroke-width="1.200"/><path d="M7.500 1.500l-4 5h2.500l-1.500 3.500 4.500-5h-2.500z" fill="#fff"/><path d="M10.500 11.500h3l-1.500 1.500z" fill="#d8d8d8"/></svg>
<svg style="left:967px;top:430px;" width="14" height="12" viewBox="0 0 14 12"><rect x=".5" y="1.500" width="13" height="10" fill="#9a9a9a" stroke="#cfcfcf"/><path d="M3 11v-5h2v5M9 11v-5h2v5M7 0v7" stroke="#333" stroke-width="1.200" fill="none"/><path d="M4.500 0h5l-2.500 3z" fill="#cfcfcf"/></svg>
<svg style="left:989px;top:430px;" width="14" height="12" viewBox="0 0 14 12"><rect x="4.500" y="0" width="5" height="4" fill="#d0d0d0"/><rect x="0" y="7.500" width="5" height="4" fill="#d0d0d0"/><rect x="9" y="7.500" width="5" height="4" fill="#d0d0d0"/><path d="M7 4v2M2.500 7.500v-1.500h9v1.500" stroke="#d0d0d0" fill="none"/></svg>
<div style="left:1008px;top:428px;width:1px;height:17px;background:#2a2a2a;box-shadow:1px 0 0 #555;"></div>
<svg style="left:1012px;top:429px;" width="15" height="15" viewBox="0 0 15 15"><path d="M8.9 7.0L14.6 8.5L12.9 10.6zM8.6 8.5L10.2 14.2L7.5 13.7zM7.2 9.0L3.1 13.2L2.1 10.6zM6.1 8.0L0.4 6.5L2.1 4.4zM6.4 6.5L4.8 0.8L7.5 1.3zM7.8 6.0L11.9 1.8L12.9 4.4z" fill="#d8d8d8"/><circle cx="7.500" cy="7.500" r="2.200" fill="#f0f0f0"/></svg>
<div class="t w" style="left:1034px;top:429px;font-size:11px;color:#d9a11c;border-bottom:1px dotted #d9a11c;line-height:14px;">+0.0</div>
<div style="left:337px;top:60px;width:189px;height:1px;background:#e4a100;"></div>
<div style="left:525px;top:60px;width:1px;height:20px;background:#e4a100;"></div>
<div style="left:525px;top:79px;width:626px;height:1px;background:#e4a100;"></div>
<div style="left:337px;top:60px;width:1px;height:388px;background:#e4a100;"></div>
<div style="left:1150px;top:79px;width:1px;height:369px;background:#e4a100;"></div>
<div style="left:337px;top:447px;width:814px;height:1px;background:#e4a100;"></div>
<div style="left:1155px;top:60px;width:206px;height:47px;background:#414141;box-shadow:inset 1px 0 0 #555,inset 0 -1px 0 #555,inset -1px 0 0 #555;"></div>
<div style="left:1222px;top:60px;width:128px;height:19px;background:linear-gradient(#383838,#2f2f2f);border:1px solid #1e1e1e;border-top-color:#1a1a1a;box-sizing:border-box;box-shadow:inset 0 1px 0 #3f3f3f;"></div>
<div style="left:1351px;top:60px;width:10px;height:19px;background:#383838;border:1px solid #222;box-sizing:border-box;"></div>
<div style="left:1354px;top:64px;width:4px;height:10px;background:repeating-linear-gradient(#202020 0 1px,#4c4c4c 1px 2px);"></div>
<div style="left:1155px;top:60px;width:66px;height:19px;background:#414141;border-top:1px solid #555;box-sizing:border-box;"></div>
<div style="left:1158px;top:64px;width:3px;height:10px;background:repeating-linear-gradient(#202020 0 1px,#4c4c4c 1px 2px);"></div>
<div class="t" style="left:1166px;top:63px;font-size:11px;color:#c8c8c8;letter-spacing:0.1px">Preview <span class="x">×</span></div>
<svg style="left:1328px;top:65px;" width="15" height="8" viewBox="0 0 15 8"><path d="M0 1.500h5.600l-2.800 3.500z" fill="#d0d0d0"/><path d="M6.500 .5h8M6.500 2.500h8M6.500 4.500h8M6.500 6.500h8" stroke="#d4d4d4" stroke-width="1"/></svg>
<svg style="left:1167px;top:88px;" width="12" height="11" viewBox="0 0 12 11"><rect x="0" y="0" width="2" height="11" fill="#d0d0d0"/><path d="M12 0v11l-9-5.500z" fill="#d0d0d0"/></svg>
<svg style="left:1190px;top:88px;" width="13" height="11" viewBox="0 0 13 11"><path d="M9 0v11l-9-5.500z" fill="#d0d0d0"/><rect x="10.500" y="0" width="2.200" height="11" fill="#d0d0d0"/></svg>
<svg style="left:1215px;top:88px;" width="11" height="11" viewBox="0 0 11 11"><path d="M0 0v11l10.500-5.500z" fill="#d0d0d0"/></svg>
<svg style="left:1238px;top:88px;" width="13" height="11" viewBox="0 0 13 11"><rect x="0" y="0" width="2.200" height="11" fill="#d0d0d0"/><path d="M4 0v11l9-5.500z" fill="#d0d0d0"/></svg>
<svg style="left:1263px;top:88px;" width="12" height="11" viewBox="0 0 12 11"><path d="M0 0v11l9-5.500z" fill="#d0d0d0"/><rect x="10" y="0" width="2" height="11" fill="#d0d0d0"/></svg>
<svg style="left:1289px;top:87px;" width="15" height="13" viewBox="0 0 15 13"><path d="M0 4h3l4.500-4v13l-4.500-4h-3z" fill="#d0d0d0"/><path d="M9 3.500c2 1.500 2 4.500 0 6M11 1.500c3.500 2.500 3.500 7.500 0 10" fill="none" stroke="#d0d0d0" stroke-width="1.300"/></svg>
<svg style="left:1317px;top:87px;" width="15" height="13" viewBox="0 0 15 13"><path d="M1 12.500v-6h2v4h9v-4h2v6z" fill="#d0d0d0"/><path d="M3.500 3h5v-2.500l4.500 3.700-4.500 3.600v-2.500h-5z" fill="#d0d0d0"/></svg>
<svg style="left:1342px;top:88px;" width="15" height="11" viewBox="0 0 15 11"><path d="M.5 0v11M3 0v11M5.500 0v11" stroke="#d0d0d0" stroke-width="1.200"/><path d="M7.500 0v11l7.500-5.500z" fill="#d0d0d0"/></svg>
<div style="left:1155px;top:112px;width:206px;height:133px;background:#414141;box-shadow:inset 1px 0 0 #555,inset 0 -1px 0 #555,inset -1px 0 0 #555;"></div>
<div style="left:1203px;top:112px;width:147px;height:19px;background:linear-gradient(#383838,#2f2f2f);border:1px solid #1e1e1e;border-top-color:#1a1a1a;box-sizing:border-box;box-shadow:inset 0 1px 0 #3f3f3f;"></div>
<div style="left:1351px;top:112px;width:10px;height:19px;background:#383838;border:1px solid #222;box-sizing:border-box;"></div>
<div style="left:1354px;top:116px;width:4px;height:10px;background:repeating-linear-gradient(#202020 0 1px,#4c4c4c 1px 2px);"></div>
<div style="left:1155px;top:112px;width:47px;height:19px;background:#414141;border-top:1px solid #555;box-sizing:border-box;"></div>
<div style="left:1158px;top:116px;width:3px;height:10px;background:repeating-linear-gradient(#202020 0 1px,#4c4c4c 1px 2px);"></div>
<div class="t" style="left:1166px;top:115px;font-size:11px;color:#c8c8c8;letter-spacing:0.35px">Info <span class="x">×</span></div>
<svg style="left:1328px;top:117px;" width="15" height="8" viewBox="0 0 15 8"><path d="M0 1.500h5.600l-2.800 3.500z" fill="#d0d0d0"/><path d="M6.500 .5h8M6.500 2.500h8M6.500 4.500h8M6.500 6.500h8" stroke="#d4d4d4" stroke-width="1"/></svg>
<div style="left:1163px;top:149px;width:21px;height:20px;background:#000;border:1px solid #2a2a2a;box-sizing:border-box;"></div>
<div class="t" style="left:1188px;top:135.5px;font-size:11px;color:#c8c8c8;white-space:pre;letter-spacing:.25px;word-spacing:-.5px">R :</div>
<div class="t" style="left:1188px;top:148.8px;font-size:11px;color:#c8c8c8;white-space:pre;letter-spacing:.25px;word-spacing:-.5px">G :</div>
<div class="t" style="left:1188px;top:162.1px;font-size:11px;color:#c8c8c8;white-space:pre;letter-spacing:.25px;word-spacing:-.5px">B :</div>
<div class="t" style="left:1188px;top:175.4px;font-size:11px;color:#c8c8c8;white-space:pre;letter-spacing:.25px;word-spacing:-.5px">A : 0</div>
<div style="left:1256px;top:139px;width:1px;height:50px;background:#2c2c2c;"></div>
<svg style="left:1264px;top:156.5px;" width="10" height="10" viewBox="0 0 10 10"><path d="M5 0v10M0 5h10" stroke="#c8c8c8" stroke-width="1"/></svg>
<div class="t" style="left:1279px;top:135.5px;font-size:11px;color:#c8c8c8;letter-spacing:.1px;word-spacing:-1px">X : 1260</div>
<div class="t" style="left:1279px;top:148.5px;font-size:11px;color:#c8c8c8;letter-spacing:.15px;word-spacing:-.6px">Y : 750</div>
<div style="left:1161px;top:195px;width:191px;height:1px;background:#2c2c2c;"></div>
<div style="left:1155px;top:251px;width:206px;height:180px;background:#414141;box-shadow:inset 1px 0 0 #555,inset 0 -1px 0 #555,inset -1px 0 0 #555;"></div>
<div style="left:1211px;top:251px;width:139px;height:19px;background:linear-gradient(#383838,#2f2f2f);border:1px solid #1e1e1e;border-top-color:#1a1a1a;box-sizing:border-box;box-shadow:inset 0 1px 0 #3f3f3f;"></div>
<div style="left:1351px;top:251px;width:10px;height:19px;background:#383838;border:1px solid #222;box-sizing:border-box;"></div>
<div style="left:1354px;top:255px;width:4px;height:10px;background:repeating-linear-gradient(#202020 0 1px,#4c4c4c 1px 2px);"></div>
<div style="left:1155px;top:251px;width:55px;height:19px;background:#414141;border-top:1px solid #555;box-sizing:border-box;"></div>
<div style="left:1158px;top:255px;width:3px;height:10px;background:repeating-linear-gradient(#202020 0 1px,#4c4c4c 1px 2px);"></div>
<div class="t" style="left:1166px;top:254px;font-size:11px;color:#c8c8c8;letter-spacing:0.35px">Audio <span class="x">×</span></div>
<svg style="left:1328px;top:256px;" width="15" height="8" viewBox="0 0 15 8"><path d="M0 1.500h5.600l-2.800 3.500z" fill="#d0d0d0"/><path d="M6.500 .5h8M6.500 2.500h8M6.500 4.500h8M6.500 6.500h8" stroke="#d4d4d4" stroke-width="1"/></svg>
<div style="left:1165px;top:279px;width:26px;height:3px;background:#000;"></div>
<div style="left:1165px;top:286px;width:26px;height:139px;background:linear-gradient(#7a2a1e 0,#80401f 8%,#857a22 20%,#4a7a22 30%,#1f7a22 40%,#1e5a20 60%,#1e3c1e 80%,#1d381d 100%);"></div>
<div style="left:1177px;top:286px;width:1px;height:139px;background:#0a0a0a;"></div>
<div class="t" style="left:1201.5px;top:283.70000000000005px;font-size:10px;color:#c8c8c8;letter-spacing:-.1px">0.0</div>
<div class="t" style="left:1198.5px;top:298.8px;font-size:10px;color:#c8c8c8;letter-spacing:-.1px">-3.0</div>
<div class="t" style="left:1198.5px;top:314.40000000000003px;font-size:10px;color:#c8c8c8;letter-spacing:-.1px">-6.0</div>
<div class="t" style="left:1198.5px;top:331.5px;font-size:10px;color:#c8c8c8;letter-spacing:-.1px">-9.0</div>
<div class="t" style="left:1198.5px;top:347.70000000000005px;font-size:10px;color:#c8c8c8;letter-spacing:-.1px">-12.0</div>
<div class="t" style="left:1198.5px;top:364.8px;font-size:10px;color:#c8c8c8;letter-spacing:-.1px">-15.0</div>
<div class="t" style="left:1198.5px;top:380.70000000000005px;font-size:10px;color:#c8c8c8;letter-spacing:-.1px">-18.0</div>
<div class="t" style="left:1198.5px;top:397.5px;font-size:10px;color:#c8c8c8;letter-spacing:-.1px">-21.0</div>
<div class="t" style="left:1198.5px;top:411.6px;font-size:10px;color:#c8c8c8;letter-spacing:-.1px">-24.0</div>
<div style="left:1247px;top:288px;width:5px;height:116px;background:#3a3a3a;border:1px solid #4e4e4e;border-top-color:#333;border-left-color:#333;box-sizing:border-box;"></div>
<div style="left:1269px;top:288px;width:5px;height:116px;background:#3a3a3a;border:1px solid #4e4e4e;border-top-color:#333;border-left-color:#333;box-sizing:border-box;"></div>
<div style="left:1291px;top:288px;width:5px;height:116px;background:#3a3a3a;border:1px solid #4e4e4e;border-top-color:#333;border-left-color:#333;box-sizing:border-box;"></div>
<svg style="left:1240px;top:340px;" width="16" height="12" viewBox="0 0 16 12"><path d="M0 6l5-5.500h10.500v11h-10.500z" fill="#525252" stroke="#3a3a3a"/></svg>
<svg style="left:1260px;top:340px;" width="23" height="12" viewBox="0 0 23 12"><path d="M0 6l6-5.500h11l6 5.500-6 5.500h-11z" fill="#525252" stroke="#3a3a3a"/></svg>
<svg style="left:1287px;top:340px;" width="16" height="12" viewBox="0 0 16 12"><path d="M16 6l-5-5.500h-10.500v11h10.500z" fill="#525252" stroke="#3a3a3a"/></svg>
<div class="t" style="left:1310px;top:282.90000000000003px;font-size:10px;color:#c8c8c8;letter-spacing:-.15px">12.0 dB</div>
<div class="t" style="left:1310px;top:297.3px;font-size:10px;color:#c8c8c8;letter-spacing:-.15px">9.0</div>
<div class="t" style="left:1310px;top:312.70000000000005px;font-size:10px;color:#c8c8c8;letter-spacing:-.15px">6.0</div>
<div class="t" style="left:1310px;top:328.1px;font-size:10px;color:#c8c8c8;letter-spacing:-.15px">3.0</div>
<div class="t" style="left:1310px;top:341.6px;font-size:10px;color:#c8c8c8;letter-spacing:-.15px">0.0 dB</div>
<div class="t" style="left:1307px;top:356.70000000000005px;font-size:10px;color:#c8c8c8;letter-spacing:-.15px">-3.0</div>
<div class="t" style="left:1307px;top:370.5px;font-size:10px;color:#c8c8c8;letter-spacing:-.15px">-6.0</div>
<div class="t" style="left:1307px;top:384.40000000000003px;font-size:10px;color:#c8c8c8;letter-spacing:-.15px">-9.0</div>
<div class="t" style="left:1307px;top:397.5px;font-size:10px;color:#c8c8c8;letter-spacing:-.15px">-12.0 dB</div>
<div class="t" style="left:1246px;top:410.5px;font-size:11px;color:#6e6e6e;border-bottom:1px dotted #6e6e6e;line-height:13px;">0</div>
<div class="t" style="left:1292px;top:410.5px;font-size:11px;color:#6e6e6e;border-bottom:1px dotted #6e6e6e;line-height:13px;">0</div>
<div style="left:1155px;top:436px;width:206px;height:26px;background:#414141;box-shadow:inset 1px 0 0 #555,inset 0 -1px 0 #555,inset -1px 0 0 #555;"></div>
<div style="left:1268px;top:436px;width:82px;height:19px;background:linear-gradient(#383838,#2f2f2f);border:1px solid #1e1e1e;border-top-color:#1a1a1a;box-sizing:border-box;box-shadow:inset 0 1px 0 #3f3f3f;"></div>
<div style="left:1351px;top:436px;width:10px;height:19px;background:#383838;border:1px solid #222;box-sizing:border-box;"></div>
<div style="left:1354px;top:440px;width:4px;height:10px;background:repeating-linear-gradient(#202020 0 1px,#4c4c4c 1px 2px);"></div>
<div style="left:1155px;top:436px;width:112px;height:19px;background:#414141;border-top:1px solid #555;box-sizing:border-box;"></div>
<div style="left:1158px;top:440px;width:3px;height:10px;background:repeating-linear-gradient(#202020 0 1px,#4c4c4c 1px 2px);"></div>
<div class="t" style="left:1166px;top:439px;font-size:11px;color:#c8c8c8;letter-spacing:0.08px">Effects &amp; Presets <span class="x">×</span></div>
<svg style="left:1328px;top:441px;" width="15" height="8" viewBox="0 0 15 8"><path d="M0 1.500h5.600l-2.800 3.500z" fill="#d0d0d0"/><path d="M6.500 .5h8M6.500 2.500h8M6.500 4.500h8M6.500 6.500h8" stroke="#d4d4d4" stroke-width="1"/></svg>
<div style="left:1161px;top:458px;width:194px;height:3px;background:#9a9a9a;border:1px solid #161616;border-bottom:none;box-sizing:border-box;"></div>
<div style="left:1155px;top:467px;width:206px;height:26px;background:#414141;box-shadow:inset 1px 0 0 #555,inset 0 -1px 0 #555,inset -1px 0 0 #555;"></div>
<div style="left:1220px;top:467px;width:130px;height:19px;background:linear-gradient(#383838,#2f2f2f);border:1px solid #1e1e1e;border-top-color:#1a1a1a;box-sizing:border-box;box-shadow:inset 0 1px 0 #3f3f3f;"></div>
<div style="left:1351px;top:467px;width:10px;height:19px;background:#383838;border:1px solid #222;box-sizing:border-box;"></div>
<div style="left:1354px;top:471px;width:4px;height:10px;background:repeating-linear-gradient(#202020 0 1px,#4c4c4c 1px 2px);"></div>
<div style="left:1155px;top:467px;width:64px;height:19px;background:#414141;border-top:1px solid #555;box-sizing:border-box;"></div>
<div style="left:1158px;top:471px;width:3px;height:10px;background:repeating-linear-gradient(#202020 0 1px,#4c4c4c 1px 2px);"></div>
<div class="t" style="left:1166px;top:470px;font-size:11px;color:#c8c8c8;letter-spacing:0.35px">Tracker <span class="x">×</span></div>
<svg style="left:1328px;top:472px;" width="15" height="8" viewBox="0 0 15 8"><path d="M0 1.500h5.600l-2.800 3.500z" fill="#d0d0d0"/><path d="M6.500 .5h8M6.500 2.500h8M6.500 4.500h8M6.500 6.500h8" stroke="#d4d4d4" stroke-width="1"/></svg>
<div style="left:1155px;top:498px;width:206px;height:26px;background:#414141;box-shadow:inset 1px 0 0 #555,inset 0 -1px 0 #555,inset -1px 0 0 #555;"></div>
<div style="left:1208px;top:498px;width:142px;height:19px;background:linear-gradient(#383838,#2f2f2f);border:1px solid #1e1e1e;border-top-color:#1a1a1a;box-sizing:border-box;box-shadow:inset 0 1px 0 #3f3f3f;"></div>
<div style="left:1351px;top:498px;width:10px;height:19px;background:#383838;border:1px solid #222;box-sizing:border-box;"></div>
<div style="left:1354px;top:502px;width:4px;height:10px;background:repeating-linear-gradient(#202020 0 1px,#4c4c4c 1px 2px);"></div>
<div style="left:1155px;top:498px;width:52px;height:19px;background:#414141;border-top:1px solid #555;box-sizing:border-box;"></div>
<div style="left:1158px;top:502px;width:3px;height:10px;background:repeating-linear-gradient(#202020 0 1px,#4c4c4c 1px 2px);"></div>
<div class="t" style="left:1166px;top:501px;font-size:11px;color:#c8c8c8;letter-spacing:0.35px">Align <span class="x">×</span></div>
<svg style="left:1328px;top:503px;" width="15" height="8" viewBox="0 0 15 8"><path d="M0 1.500h5.600l-2.800 3.500z" fill="#d0d0d0"/><path d="M6.500 .5h8M6.500 2.500h8M6.500 4.500h8M6.500 6.500h8" stroke="#d4d4d4" stroke-width="1"/></svg>
<div style="left:1155px;top:529px;width:206px;height:26px;background:#414141;box-shadow:inset 1px 0 0 #555,inset 0 -1px 0 #555,inset -1px 0 0 #555;"></div>
<div style="left:1232px;top:529px;width:118px;height:19px;background:linear-gradient(#383838,#2f2f2f);border:1px solid #1e1e1e;border-top-color:#1a1a1a;box-sizing:border-box;box-shadow:inset 0 1px 0 #3f3f3f;"></div>
<div style="left:1351px;top:529px;width:10px;height:19px;background:#383838;border:1px solid #222;box-sizing:border-box;"></div>
<div style="left:1354px;top:533px;width:4px;height:10px;background:repeating-linear-gradient(#202020 0 1px,#4c4c4c 1px 2px);"></div>
<div style="left:1155px;top:529px;width:76px;height:19px;background:#414141;border-top:1px solid #555;box-sizing:border-box;"></div>
<div style="left:1158px;top:533px;width:3px;height:10px;background:repeating-linear-gradient(#202020 0 1px,#4c4c4c 1px 2px);"></div>
<div class="t" style="left:1166px;top:532px;font-size:11px;color:#c8c8c8;letter-spacing:0.35px">Smoother <span class="x">×</span></div>
<svg style="left:1328px;top:534px;" width="15" height="8" viewBox="0 0 15 8"><path d="M0 1.500h5.600l-2.800 3.500z" fill="#d0d0d0"/><path d="M6.500 .5h8M6.500 2.500h8M6.500 4.500h8M6.500 6.500h8" stroke="#d4d4d4" stroke-width="1"/></svg>
<div style="left:1155px;top:560px;width:206px;height:26px;background:#414141;box-shadow:inset 1px 0 0 #555,inset 0 -1px 0 #555,inset -1px 0 0 #555;"></div>
<div style="left:1223px;top:560px;width:127px;height:19px;background:linear-gradient(#383838,#2f2f2f);border:1px solid #1e1e1e;border-top-color:#1a1a1a;box-sizing:border-box;box-shadow:inset 0 1px 0 #3f3f3f;"></div>
<div style="left:1351px;top:560px;width:10px;height:19px;background:#383838;border:1px solid #222;box-sizing:border-box;"></div>
<div style="left:1354px;top:564px;width:4px;height:10px;background:repeating-linear-gradient(#202020 0 1px,#4c4c4c 1px 2px);"></div>
<div style="left:1155px;top:560px;width:67px;height:19px;background:#414141;border-top:1px solid #555;box-sizing:border-box;"></div>
<div style="left:1158px;top:564px;width:3px;height:10px;background:repeating-linear-gradient(#202020 0 1px,#4c4c4c 1px 2px);"></div>
<div class="t" style="left:1166px;top:563px;font-size:11px;color:#c8c8c8;letter-spacing:0.35px">Wiggler <span class="x">×</span></div>
<svg style="left:1328px;top:565px;" width="15" height="8" viewBox="0 0 15 8"><path d="M0 1.500h5.600l-2.800 3.500z" fill="#d0d0d0"/><path d="M6.500 .5h8M6.500 2.500h8M6.500 4.500h8M6.500 6.500h8" stroke="#d4d4d4" stroke-width="1"/></svg>
<div style="left:1155px;top:591px;width:206px;height:26px;background:#414141;box-shadow:inset 1px 0 0 #555,inset 0 -1px 0 #555,inset -1px 0 0 #555;"></div>
<div style="left:1254px;top:591px;width:96px;height:19px;background:linear-gradient(#383838,#2f2f2f);border:1px solid #1e1e1e;border-top-color:#1a1a1a;box-sizing:border-box;box-shadow:inset 0 1px 0 #3f3f3f;"></div>
<div style="left:1351px;top:591px;width:10px;height:19px;background:#383838;border:1px solid #222;box-sizing:border-box;"></div>
<div style="left:1354px;top:595px;width:4px;height:10px;background:repeating-linear-gradient(#202020 0 1px,#4c4c4c 1px 2px);"></div>
<div style="left:1155px;top:591px;width:98px;height:19px;background:#414141;border-top:1px solid #555;box-sizing:border-box;"></div>
<div style="left:1158px;top:595px;width:3px;height:10px;background:repeating-linear-gradient(#202020 0 1px,#4c4c4c 1px 2px);"></div>
<div class="t" style="left:1166px;top:594px;font-size:11px;color:#c8c8c8;letter-spacing:0.12px">Motion Sketch <span class="x">×</span></div>
<svg style="left:1328px;top:596px;" width="15" height="8" viewBox="0 0 15 8"><path d="M0 1.500h5.600l-2.800 3.500z" fill="#d0d0d0"/><path d="M6.500 .5h8M6.500 2.500h8M6.500 4.500h8M6.500 6.500h8" stroke="#d4d4d4" stroke-width="1"/></svg>
<div style="left:1155px;top:622px;width:206px;height:26px;background:#414141;box-shadow:inset 1px 0 0 #555,inset 0 -1px 0 #555,inset -1px 0 0 #555;"></div>
<div style="left:1278px;top:622px;width:72px;height:19px;background:linear-gradient(#383838,#2f2f2f);border:1px solid #1e1e1e;border-top-color:#1a1a1a;box-sizing:border-box;box-shadow:inset 0 1px 0 #3f3f3f;"></div>
<div style="left:1351px;top:622px;width:10px;height:19px;background:#383838;border:1px solid #222;box-sizing:border-box;"></div>
<div style="left:1354px;top:626px;width:4px;height:10px;background:repeating-linear-gradient(#202020 0 1px,#4c4c4c 1px 2px);"></div>
<div style="left:1155px;top:622px;width:122px;height:19px;background:#414141;border-top:1px solid #555;box-sizing:border-box;"></div>
<div style="left:1158px;top:626px;width:3px;height:10px;background:repeating-linear-gradient(#202020 0 1px,#4c4c4c 1px 2px);"></div>
<div class="t" style="left:1166px;top:625px;font-size:11px;color:#c8c8c8;letter-spacing:0.35px">Mask Interpolation <span class="x">×</span></div>
<svg style="left:1328px;top:627px;" width="15" height="8" viewBox="0 0 15 8"><path d="M0 1.500h5.600l-2.800 3.500z" fill="#d0d0d0"/><path d="M6.500 .5h8M6.500 2.500h8M6.500 4.500h8M6.500 6.500h8" stroke="#d4d4d4" stroke-width="1"/></svg>
<div style="left:1155px;top:653px;width:206px;height:26px;background:#414141;box-shadow:inset 1px 0 0 #555,inset 0 -1px 0 #555,inset -1px 0 0 #555;"></div>
<div style="left:1233px;top:653px;width:117px;height:19px;background:linear-gradient(#383838,#2f2f2f);border:1px solid #1e1e1e;border-top-color:#1a1a1a;box-sizing:border-box;box-shadow:inset 0 1px 0 #3f3f3f;"></div>
<div style="left:1351px;top:653px;width:10px;height:19px;background:#383838;border:1px solid #222;box-sizing:border-box;"></div>
<div style="left:1354px;top:657px;width:4px;height:10px;background:repeating-linear-gradient(#202020 0 1px,#4c4c4c 1px 2px);"></div>
<div style="left:1155px;top:653px;width:77px;height:19px;background:#414141;border-top:1px solid #555;box-sizing:border-box;"></div>
<div style="left:1158px;top:657px;width:3px;height:10px;background:repeating-linear-gradient(#202020 0 1px,#4c4c4c 1px 2px);"></div>
<div class="t" style="left:1166px;top:656px;font-size:11px;color:#c8c8c8;letter-spacing:0.3px">Paragraph <span class="x">×</span></div>
<svg style="left:1328px;top:658px;" width="15" height="8" viewBox="0 0 15 8"><path d="M0 1.500h5.600l-2.800 3.500z" fill="#d0d0d0"/><path d="M6.500 .5h8M6.500 2.500h8M6.500 4.500h8M6.500 6.500h8" stroke="#d4d4d4" stroke-width="1"/></svg>
<div style="left:1155px;top:684px;width:206px;height:26px;background:#414141;box-shadow:inset 1px 0 0 #555,inset 0 -1px 0 #555,inset -1px 0 0 #555;"></div>
<div style="left:1231px;top:684px;width:119px;height:19px;background:linear-gradient(#383838,#2f2f2f);border:1px solid #1e1e1e;border-top-color:#1a1a1a;box-sizing:border-box;box-shadow:inset 0 1px 0 #3f3f3f;"></div>
<div style="left:1351px;top:684px;width:10px;height:19px;background:#383838;border:1px solid #222;box-sizing:border-box;"></div>
<div style="left:1354px;top:688px;width:4px;height:10px;background:repeating-linear-gradient(#202020 0 1px,#4c4c4c 1px 2px);"></div>
<div style="left:1155px;top:684px;width:75px;height:19px;background:#414141;border-top:1px solid #555;box-sizing:border-box;"></div>
<div style="left:1158px;top:688px;width:3px;height:10px;background:repeating-linear-gradient(#202020 0 1px,#4c4c4c 1px 2px);"></div>
<div class="t" style="left:1166px;top:687px;font-size:11px;color:#c8c8c8;letter-spacing:0.3px">Character <span class="x">×</span></div>
<svg style="left:1328px;top:689px;" width="15" height="8" viewBox="0 0 15 8"><path d="M0 1.500h5.600l-2.800 3.500z" fill="#d0d0d0"/><path d="M6.500 .5h8M6.500 2.500h8M6.500 4.500h8M6.500 6.500h8" stroke="#d4d4d4" stroke-width="1"/></svg>
<div style="left:13px;top:453px;width:1138px;height:238px;background:#414141;"></div>
<div style="left:13px;top:453px;width:1126px;height:18px;background:linear-gradient(#393939,#2f2f2f);border-bottom:1px solid #1f1f1f;border-right:1px solid #1a1a1a;box-sizing:border-box;box-shadow:inset 0 1px 0 #404040;"></div>
<div style="left:13px;top:453px;width:97px;height:18px;background:#383838;border:1px solid #222;border-top-color:#444;box-sizing:border-box;"></div>
<div class="t" style="left:24px;top:456px;font-size:11px;color:#8a8a8a;letter-spacing:-0.05px">Render Queue</div>
<div style="left:111px;top:453px;width:59px;height:18px;background:#383838;border:1px solid #222;border-top-color:#444;box-sizing:border-box;"></div>
<div style="left:124px;top:458px;width:10px;height:10px;background:#b5a07c;"></div>
<div class="t" style="left:138px;top:456px;font-size:11px;color:#8a8a8a;letter-spacing:0.35px">kkk</div>
<div style="left:171px;top:453px;width:68px;height:18px;background:#383838;border:1px solid #222;border-top-color:#444;box-sizing:border-box;"></div>
<div style="left:184px;top:458px;width:10px;height:10px;background:#b5a07c;"></div>
<div class="t" style="left:198px;top:456px;font-size:11px;color:#8a8a8a;letter-spacing:0.35px">kkk 2</div>
<div style="left:240px;top:453px;width:80px;height:18px;background:#383838;border:1px solid #222;border-top-color:#444;box-sizing:border-box;"></div>
<div style="left:253px;top:458px;width:10px;height:10px;background:#b5a07c;"></div>
<div class="t" style="left:267px;top:456px;font-size:11px;color:#8a8a8a;letter-spacing:0.05px">Comp 1</div>
<div style="left:321px;top:453px;width:69px;height:19px;background:#414141;border-top:1px solid #555;box-sizing:border-box;"></div>
<div style="left:325px;top:457px;width:3px;height:10px;background:repeating-linear-gradient(#202020 0 1px,#4c4c4c 1px 2px);"></div>
<div style="left:333px;top:458px;width:10px;height:10px;background:#b5a07c;"></div>
<div class="t w" style="left:347px;top:456px;font-size:11px;color:#c8c8c8;">kkk 3 <span class="x">×</span></div>
<svg style="left:1118px;top:458px;" width="15" height="8" viewBox="0 0 15 8"><path d="M0 1.500h5.600l-2.800 3.500z" fill="#d0d0d0"/><path d="M6.500 .5h8M6.500 2.500h8M6.500 4.500h8M6.500 6.500h8" stroke="#d4d4d4" stroke-width="1"/></svg>
<div style="left:1140px;top:453px;width:10px;height:18px;background:#383838;border:1px solid #222;box-sizing:border-box;"></div>
<div style="left:1143px;top:457px;width:4px;height:10px;background:repeating-linear-gradient(#202020 0 1px,#4c4c4c 1px 2px);"></div>
<div class="t" style="left:24px;top:477px;font-size:16px;color:#d9a11c;font-family:'Liberation Serif',serif;line-height:16px;letter-spacing:1.150px;"><b>0:00:01:05</b></div>
<div style="left:24px;top:492px;width:83px;height:1px;background:repeating-linear-gradient(90deg,#d9a11c 0 1px,transparent 1px 2px);"></div>
<div class="t" style="left:24px;top:493px;font-size:10px;color:#d9a11c;letter-spacing:-.2px">00036 (30.037 fps)</div>
<div style="left:119px;top:481px;width:173px;height:18px;background:#9f9f9f;border:1px solid #161616;box-sizing:border-box;"></div>
<svg style="left:123px;top:483px;" width="24" height="14" viewBox="0 0 24 14"><circle cx="8" cy="5.500" r="4.100" fill="none" stroke="#222" stroke-width="1.200"/><path d="M5.200 8.500l-4.200 4.500" stroke="#222" stroke-width="1.400"/><path d="M15.500 4h7l-3.500 4.800z" fill="#1a1a1a"/></svg>
<svg style="left:303px;top:484px;" width="27" height="14" viewBox="0 0 27 14"><g fill="#cfcfcf"><rect x="0" y="0" width="5" height="3"/><rect x="0" y="4.500" width="5" height="3"/><rect x="0" y="9" width="5" height="3"/><rect x="17" y="0" width="5" height="3"/><rect x="17" y="4.500" width="5" height="3"/><rect x="17" y="9" width="5" height="3"/></g><g fill="none" stroke="#cfcfcf" stroke-width="1.200"><path d="M5 1.500c4 0 3 4.500 6 4.500M5 10.500c4 0 3-4.500 6-4.500M5 6h12M17 1.500c-4 0-3 4.500-6 4.500M17 10.500c-4 0-3-4.500-6-4.500"/></g><path d="M23.500 11h3l-1.500 2z" fill="#cfcfcf"/></svg>
<svg style="left:340px;top:481px;" width="19" height="18" viewBox="0 0 19 18"><path d="M4 0v8M0 4h8M1.200 1.200l5.600 5.600M6.800 1.200l-5.600 5.600" stroke="#cfcfcf" stroke-width="1"/><path d="M12.500 7l6 2.500v6l-6 2.500-6-2.500v-6z" fill="#e0e0e0"/><path d="M6.500 9.500l6 2.500 6-2.500M12.500 12v6" stroke="#777" fill="none"/></svg>
<svg style="left:374px;top:484px;" width="20" height="15" viewBox="0 0 20 15"><path d="M3.500 7c0-9 13-9 13 0z" fill="#e0e0e0"/><circle cx="10" cy="4.300" r="1.600" fill="#444"/><rect x="9.200" y="5" width="1.600" height="5" fill="#444"/><rect x="0" y="7" width="20" height="3" fill="#d0d0d0"/><rect x="0" y="10.500" width="20" height="4.500" fill="#8c8c8c"/></svg>
<svg style="left:400px;top:482px;" width="20" height="17" viewBox="0 0 20 17"><g fill="none" stroke="#bdbdbd" stroke-width="1"><path d="M.5 6v11M2.500 5v12M4.500 4v12M6.500 3v12M8.500 13v3M10.500 13v3M12.500 13v2" stroke-dasharray="1.500 .8"/></g><rect x="8.500" y="1" width="11" height="11" fill="#9a9a9a" stroke="#cfcfcf"/><rect x="11" y="3" width="6" height="7" fill="#555"/><path d="M9.500 2.500h1M9.500 5h1M9.500 7.500h1M9.500 10h1M17.500 2.500h1M17.500 5h1M17.500 7.500h1M17.500 10h1" stroke="#333" stroke-width="1.200"/></svg>
<svg style="left:427px;top:481px;" width="18" height="18" viewBox="0 0 18 18"><ellipse cx="8" cy="12.500" rx="7" ry="4.500" fill="#6a6a6a"/><ellipse cx="9" cy="10" rx="7" ry="4.500" fill="#8a8a8a"/><ellipse cx="10" cy="7.500" rx="7" ry="4.500" fill="#a5a5a5"/><ellipse cx="11" cy="5" rx="7" ry="4.500" fill="#cfcfcf"/></svg>
<svg style="left:459px;top:482px;" width="21" height="18" viewBox="0 0 21 18"><ellipse cx="11.500" cy="6.500" rx="9" ry="6.300" fill="#d4d4d4"/><path d="M4 10l-3 6 7-4z" fill="#d4d4d4"/><circle cx="1.500" cy="16.500" r="1.300" fill="#d4d4d4"/><path d="M11.500 2.500c-3.500 0-3 4-1.200 5v2h2.400v-2c1.800-1 2.300-5-1.200-5z" fill="#fff" stroke="#555" stroke-width=".8"/></svg>
<svg style="left:487px;top:481px;" width="16" height="18" viewBox="0 0 16 18"><circle cx="8" cy="11" r="6" fill="#777" stroke="#cfcfcf" stroke-width="1.800"/><path d="M5.500 1.500h5M8 1.500v3.500M2 4l2 2" stroke="#cfcfcf" stroke-width="1.600"/></svg>
<svg style="left:512px;top:483px;" width="21" height="16" viewBox="0 0 21 16"><rect x="2" y="1" width="18" height="11" fill="#6e6e6e"/><path d="M2 1h18M2 4.500h18M2 8.500h18" stroke="#8c8c8c" stroke-width=".8"/><path d="M2 2c5 0 6 9 10 9s4-6 8-6" fill="none" stroke="#e4e4e4" stroke-width="1.400"/><path d="M2.500 0v13M1 12.500h19.500M6.500 12.500v2M11 12.500v2M15.500 12.500v2M20 12.500v2M2.500 12.500v2" stroke="#cfcfcf" stroke-width="1" fill="none"/></svg>
<div style="left:13px;top:508px;width:533px;height:1px;background:#2a2a2a;"></div>
<div style="left:13px;top:509px;width:533px;height:18px;background:#393939;"></div>
<div style="left:13px;top:527px;width:533px;height:1px;background:#262626;"></div>
<svg style="left:19px;top:514px;" width="13" height="9" viewBox="0 0 13 9"><path d="M.5 4.500c3-5.300 9-5.300 12 0-3 5.300-9 5.300-12 0z" fill="#e0e0e0" stroke="#888" stroke-width=".6"/><circle cx="6.500" cy="4.500" r="2.300" fill="#555"/><circle cx="6.500" cy="4.500" r="1" fill="#e0e0e0"/></svg>
<svg style="left:33px;top:513px;" width="13" height="11" viewBox="0 0 13 11"><path d="M0 3.500h2.500l4-3.500v11l-4-3.500h-2.500z" fill="#dcdcdc"/><path d="M8 2.500c1.500 1.500 1.500 4.500 0 6M10 1c2.500 2.500 2.500 6.500 0 9" fill="none" stroke="#dcdcdc" stroke-width="1.100"/></svg>
<svg style="left:50px;top:515px;" width="8" height="8" viewBox="0 0 8 8"><circle cx="4" cy="4" r="3.500" fill="#cfcfcf"/></svg>
<svg style="left:65px;top:512px;" width="9" height="12" viewBox="0 0 9 12"><path d="M2 5.500v-2c0-3.500 5-3.500 5 0v2" fill="none" stroke="#dcdcdc" stroke-width="1.400"/><rect x="0.500" y="5.500" width="8" height="6" fill="#dcdcdc"/><rect x="3.800" y="7.500" width="1.400" height="2.500" fill="#333"/></svg>
<div style="left:81px;top:513px;width:1px;height:11px;background:#222;box-shadow:1px 0 0 #5e5e5e;"></div>
<svg style="left:95px;top:511px;" width="18" height="15" viewBox="0 0 18 15"><path d="M1 8.500l7-6 6 .3 1.300 5.500-7.500 6z" fill="#d0d0d0"/><circle cx="12.300" cy="5.200" r="1.300" fill="#333"/><path d="M12.300 5c1-2.500 3-4 4.800-3.500" stroke="#d0d0d0" fill="none" stroke-width="1"/></svg>
<div style="left:114px;top:513px;width:1px;height:11px;background:#222;box-shadow:1px 0 0 #5e5e5e;"></div>
<div class="t" style="left:119px;top:513px;font-size:10px;color:#c8c8c8;">#</div>
<div style="left:146px;top:513px;width:1px;height:11px;background:#222;box-shadow:1px 0 0 #5e5e5e;"></div>
<div class="t" style="left:152px;top:513px;font-size:10px;color:#c8c8c8;letter-spacing:-.55px">Source Name</div>
<div style="left:276px;top:513px;width:1px;height:11px;background:#222;box-shadow:1px 0 0 #5e5e5e;"></div>
<svg style="left:282px;top:516px;" width="11" height="5" viewBox="0 0 11 5"><path d="M0 2.500h3M8 2.500h3" stroke="#e0e0e0" stroke-width="1.200"/><circle cx="5.500" cy="2" r="1.600" fill="#e0e0e0"/><rect x="5" y="2" width="1" height="3" fill="#e0e0e0"/></svg>
<svg style="left:297px;top:513px;" width="11" height="11" viewBox="0 0 11 11"><circle cx="5.500" cy="5.500" r="2.300" fill="none" stroke="#dcdcdc" stroke-width="1.200"/><path d="M5.500 0v2.500M5.500 8.500v2.500M0 5.500h2.500M8.500 5.500h2.500M1.600 1.600l1.800 1.800M7.600 7.600l1.800 1.800M9.400 1.600l-1.800 1.800M3.400 7.600l-1.800 1.800" stroke="#dcdcdc" stroke-width="1"/></svg>
<svg style="left:312px;top:513px;" width="11" height="11" viewBox="0 0 11 11"><path d="M1 1l9 9" stroke="#dcdcdc" stroke-width="1.600" stroke-dasharray="2.200 1.200"/></svg>
<div class="t" style="left:327px;top:512px;font-size:14px;color:#dcdcdc;font-family:'Liberation Serif',serif;"><b><i>fx</i></b></div>
<svg style="left:342px;top:513px;" width="12" height="12" viewBox="0 0 12 12"><rect x=".5" y=".5" width="11" height="11" fill="none" stroke="#dcdcdc"/><path d="M3.500 .5v11M8.500 .5v11M.5 3h3M.5 6h3M.5 9h3M8.500 3h3M8.500 6h3M8.500 9h3" stroke="#dcdcdc"/></svg>
<svg style="left:356px;top:513px;" width="13" height="12" viewBox="0 0 13 12"><ellipse cx="5.500" cy="8" rx="5" ry="3.500" fill="#8a8a8a"/><ellipse cx="6.500" cy="6" rx="5" ry="3.500" fill="#aaa"/><ellipse cx="7.500" cy="4" rx="5" ry="3.500" fill="#d8d8d8"/></svg>
<svg style="left:371px;top:513px;" width="12" height="12" viewBox="0 0 12 12"><circle cx="6" cy="6" r="5.400" fill="#e4e4e4"/><path d="M2.200 9.800a5.400 5.400 0 0 0 7.600-7.600z" fill="#222"/></svg>
<svg style="left:386px;top:512px;" width="12" height="13" viewBox="0 0 12 13"><path d="M6 .5l5.500 2.500v6.500l-5.500 3-5.500-3v-6.500z" fill="#e0e0e0"/><path d="M.5 3l5.500 2.500 5.500-2.500M6 5.500v7" stroke="#777" fill="none"/></svg>
<div style="left:413px;top:513px;width:1px;height:11px;background:#222;box-shadow:1px 0 0 #5e5e5e;"></div>
<div class="t" style="left:419px;top:513px;font-size:10px;color:#c8c8c8;letter-spacing:-.4px">Parent</div>
<div style="left:530px;top:513px;width:1px;height:11px;background:#222;box-shadow:1px 0 0 #5e5e5e;"></div>
<div style="left:13px;top:528px;width:533px;height:16px;background:#3e3e3e;"></div>
<div style="left:13px;top:544px;width:533px;height:1px;background:#343434;"></div>
<svg style="left:19px;top:531px;" width="13" height="9" viewBox="0 0 13 9"><path d="M.5 4.500c3-5.300 9-5.300 12 0-3 5.300-9 5.300-12 0z" fill="#e0e0e0" stroke="#888" stroke-width=".6"/><circle cx="6.500" cy="4.500" r="2.300" fill="#555"/><circle cx="6.500" cy="4.500" r="1" fill="#e0e0e0"/></svg>
<div style="left:18px;top:542px;width:15px;height:1px;background:#6a6a6a;"></div>
<svg style="left:33px;top:530px;" width="13" height="11" viewBox="0 0 13 11"><path d="M0 3.500h2.500l4-3.500v11l-4-3.500h-2.500z" fill="#dcdcdc"/><path d="M8 2.500c1.500 1.500 1.500 4.500 0 6M10 1c2.500 2.500 2.500 6.500 0 9" fill="none" stroke="#dcdcdc" stroke-width="1.100"/></svg>
<div style="left:32px;top:542px;width:15px;height:1px;background:#6a6a6a;"></div>
<div style="left:49px;top:529px;width:13px;height:13px;background:#454545;border-left:1px solid #555;border-top:1px solid #3a3a3a;border-bottom:1px solid #6a6a6a;box-sizing:border-box;"></div>
<div style="left:64px;top:529px;width:13px;height:13px;background:#454545;border-left:1px solid #555;border-top:1px solid #3a3a3a;border-bottom:1px solid #6a6a6a;box-sizing:border-box;"></div>
<svg style="left:87px;top:531px;" width="6" height="9" viewBox="0 0 6 9"><path d="M0 0v9l6-4.500z" fill="#8a8a8a"/></svg>
<div style="left:100px;top:531px;width:10px;height:10px;background:#b5a07c;"></div>
<div class="t" style="left:121px;top:529px;font-size:11px;color:#c8c8c8;"><b>1</b></div>
<svg style="left:148px;top:530px;" width="16" height="14" viewBox="0 0 16 14"><rect x="0" y=".3" width="3.200" height="13.400" fill="#c9c9c9"/><rect x="12.800" y=".3" width="3.200" height="13.400" fill="#c9c9c9"/><rect x="3.200" y="1" width="9.600" height="12" fill="#080808"/><rect x="3.200" y="2.200" width="9.600" height="1.100" fill="#c4c4c4"/><rect x="3.200" y="10.800" width="9.600" height="1.100" fill="#c4c4c4"/><g fill="#1a1a1a"><circle cx="1.600" cy="2.300" r=".7"/><circle cx="1.600" cy="4.500" r=".7"/><circle cx="1.600" cy="6.700" r=".7"/><circle cx="1.600" cy="8.900" r=".7"/><circle cx="1.600" cy="11.100" r=".7"/><circle cx="14.400" cy="2.300" r=".7"/><circle cx="14.400" cy="4.500" r=".7"/><circle cx="14.400" cy="6.700" r=".7"/><circle cx="14.400" cy="8.900" r=".7"/><circle cx="14.400" cy="11.100" r=".7"/></g><circle cx="6.200" cy="5.800" r="2" fill="#1e93d2"/><rect x="9.300" y="4.700" width="2.800" height="3.200" fill="#e0581a"/><path d="M4.600 9.900l3-3.200 3 3.200z" fill="#2dbb22"/></svg>
<div class="t" style="left:168px;top:529px;font-size:11px;color:#d0d0d0;letter-spacing:0.65px"><b>kkk</b></div>
<svg style="left:282px;top:533px;" width="11" height="5" viewBox="0 0 11 5"><path d="M0 2.500h3M8 2.500h3" stroke="#e0e0e0" stroke-width="1.200"/><circle cx="5.500" cy="2" r="1.600" fill="#e0e0e0"/><rect x="5" y="2" width="1" height="3" fill="#e0e0e0"/></svg>
<div style="left:281px;top:542px;width:13px;height:1px;background:#8a8a8a;"></div>
<div style="left:296px;top:529px;width:13px;height:13px;background:#454545;border-left:1px solid #555;border-top:1px solid #3a3a3a;border-bottom:1px solid #6a6a6a;box-sizing:border-box;"></div>
<svg style="left:311px;top:530px;" width="12" height="12" viewBox="0 0 12 12"><path d="M1 11l10-10" stroke="#e4e4e4" stroke-width="1.500"/></svg>
<div style="left:311px;top:542px;width:13px;height:1px;background:#8a8a8a;"></div>
<div style="left:356px;top:529px;width:13px;height:13px;background:#454545;border-left:1px solid #555;border-top:1px solid #3a3a3a;border-bottom:1px solid #6a6a6a;box-sizing:border-box;"></div>
<div style="left:371px;top:529px;width:13px;height:13px;background:#454545;border-left:1px solid #555;border-top:1px solid #3a3a3a;border-bottom:1px solid #6a6a6a;box-sizing:border-box;"></div>
<div style="left:386px;top:529px;width:13px;height:13px;background:#454545;border-left:1px solid #555;border-top:1px solid #3a3a3a;border-bottom:1px solid #6a6a6a;box-sizing:border-box;"></div>
<svg style="left:419px;top:530px;" width="12" height="12" viewBox="0 0 12 12"><path d="M6 6.500a1.200 1.200 0 1 1 1.500 -1.500a2.800 2.800 0 1 1 -4 -.5a4.500 4.500 0 1 1 6.500 5.500" fill="none" stroke="#d0d0d0" stroke-width="1.100"/></svg>
<div style="left:437px;top:529px;width:89px;height:14px;background:linear-gradient(#4a4a4a,#3c3c3c);border:1px solid #1d1d1d;box-sizing:border-box;box-shadow:inset 1px 1px 0 #5a5a5a;"></div>
<div style="left:508px;top:532px;width:1px;height:8px;background:#222;box-shadow:1px 0 0 #5c5c5c;"></div>
<svg style="left:513px;top:533px;" width="9" height="6" viewBox="0 0 9 6"><path d="M0 0h9l-4.500 5.500z" fill="#c8c8c8"/></svg>
<div class="t" style="left:445px;top:528.5px;font-size:11px;color:#c8c8c8;letter-spacing:0.35px">None</div>
<div style="left:13px;top:545px;width:533px;height:16px;background:#3e3e3e;"></div>
<div style="left:13px;top:561px;width:533px;height:1px;background:#343434;"></div>
<svg style="left:19px;top:548px;" width="13" height="9" viewBox="0 0 13 9"><path d="M.5 4.500c3-5.300 9-5.300 12 0-3 5.300-9 5.300-12 0z" fill="#e0e0e0" stroke="#888" stroke-width=".6"/><circle cx="6.500" cy="4.500" r="2.300" fill="#555"/><circle cx="6.500" cy="4.500" r="1" fill="#e0e0e0"/></svg>
<div style="left:18px;top:559px;width:15px;height:1px;background:#6a6a6a;"></div>
<div style="left:49px;top:546px;width:13px;height:13px;background:#454545;border-left:1px solid #555;border-top:1px solid #3a3a3a;border-bottom:1px solid #6a6a6a;box-sizing:border-box;"></div>
<div style="left:64px;top:546px;width:13px;height:13px;background:#454545;border-left:1px solid #555;border-top:1px solid #3a3a3a;border-bottom:1px solid #6a6a6a;box-sizing:border-box;"></div>
<svg style="left:87px;top:548px;" width="6" height="9" viewBox="0 0 6 9"><path d="M0 0v9l6-4.500z" fill="#8a8a8a"/></svg>
<div style="left:100px;top:548px;width:10px;height:10px;background:#b5a07c;"></div>
<div class="t" style="left:121px;top:546px;font-size:11px;color:#c8c8c8;"><b>2</b></div>
<svg style="left:148px;top:547px;" width="16" height="14" viewBox="0 0 16 14"><rect x="0" y=".3" width="3.200" height="13.400" fill="#c9c9c9"/><rect x="12.800" y=".3" width="3.200" height="13.400" fill="#c9c9c9"/><rect x="3.200" y="1" width="9.600" height="12" fill="#080808"/><rect x="3.200" y="2.200" width="9.600" height="1.100" fill="#c4c4c4"/><rect x="3.200" y="10.800" width="9.600" height="1.100" fill="#c4c4c4"/><g fill="#1a1a1a"><circle cx="1.600" cy="2.300" r=".7"/><circle cx="1.600" cy="4.500" r=".7"/><circle cx="1.600" cy="6.700" r=".7"/><circle cx="1.600" cy="8.900" r=".7"/><circle cx="1.600" cy="11.100" r=".7"/><circle cx="14.400" cy="2.300" r=".7"/><circle cx="14.400" cy="4.500" r=".7"/><circle cx="14.400" cy="6.700" r=".7"/><circle cx="14.400" cy="8.900" r=".7"/><circle cx="14.400" cy="11.100" r=".7"/></g><circle cx="6.200" cy="5.800" r="2" fill="#1e93d2"/><rect x="9.300" y="4.700" width="2.800" height="3.200" fill="#e0581a"/><path d="M4.600 9.900l3-3.200 3 3.200z" fill="#2dbb22"/></svg>
<div class="t" style="left:168px;top:546px;font-size:11px;color:#d0d0d0;letter-spacing:0.2px"><b>Comp 1</b></div>
<svg style="left:282px;top:549px;" width="11" height="6" viewBox="0 0 11 6"><path d="M0 5.500h11M2.500 5c0-5 6-5 6 0z" stroke="#e0e0e0" fill="#e0e0e0" stroke-width="1"/></svg>
<div style="left:281px;top:559px;width:13px;height:1px;background:#8a8a8a;"></div>
<div style="left:296px;top:546px;width:13px;height:13px;background:#454545;border-left:1px solid #555;border-top:1px solid #3a3a3a;border-bottom:1px solid #6a6a6a;box-sizing:border-box;"></div>
<svg style="left:311px;top:547px;" width="12" height="12" viewBox="0 0 12 12"><path d="M1 11l10-10" stroke="#e4e4e4" stroke-width="1.500"/></svg>
<div style="left:311px;top:559px;width:13px;height:1px;background:#8a8a8a;"></div>
<div style="left:356px;top:546px;width:13px;height:13px;background:#454545;border-left:1px solid #555;border-top:1px solid #3a3a3a;border-bottom:1px solid #6a6a6a;box-sizing:border-box;"></div>
<div style="left:371px;top:546px;width:13px;height:13px;background:#454545;border-left:1px solid #555;border-top:1px solid #3a3a3a;border-bottom:1px solid #6a6a6a;box-sizing:border-box;"></div>
<div style="left:386px;top:546px;width:13px;height:13px;background:#454545;border-left:1px solid #555;border-top:1px solid #3a3a3a;border-bottom:1px solid #6a6a6a;box-sizing:border-box;"></div>
<svg style="left:419px;top:547px;" width="12" height="12" viewBox="0 0 12 12"><path d="M6 6.500a1.200 1.200 0 1 1 1.500 -1.500a2.800 2.800 0 1 1 -4 -.5a4.500 4.500 0 1 1 6.500 5.500" fill="none" stroke="#d0d0d0" stroke-width="1.100"/></svg>
<div style="left:437px;top:546px;width:89px;height:14px;background:linear-gradient(#4a4a4a,#3c3c3c);border:1px solid #1d1d1d;box-sizing:border-box;box-shadow:inset 1px 1px 0 #5a5a5a;"></div>
<div style="left:508px;top:549px;width:1px;height:8px;background:#222;box-shadow:1px 0 0 #5c5c5c;"></div>
<svg style="left:513px;top:550px;" width="9" height="6" viewBox="0 0 9 6"><path d="M0 0h9l-4.500 5.500z" fill="#c8c8c8"/></svg>
<div class="t" style="left:445px;top:545.5px;font-size:11px;color:#c8c8c8;letter-spacing:0.35px">None</div>
<div style="left:546px;top:472px;width:1px;height:219px;background:#2a2a2a;"></div>
<div style="left:547px;top:472px;width:604px;height:219px;background:#424242;"></div>
<div style="left:547px;top:478px;width:586px;height:10px;background:#7e7e7e;border:1px solid #1e1e1e;box-sizing:border-box;"></div>
<div style="left:548px;top:479px;width:6px;height:8px;background:#d9a11c;border-radius:4px 0 0 0;"></div>
<div style="left:550px;top:482px;width:1px;height:4px;background:#6a4a00;"></div>
<div style="left:552px;top:482px;width:1px;height:4px;background:#6a4a00;"></div>
<div style="left:1127px;top:479px;width:5px;height:8px;background:#d9a11c;"></div>
<div style="left:1128px;top:482px;width:1px;height:4px;background:#6a4a00;"></div>
<div style="left:1130px;top:482px;width:1px;height:4px;background:#6a4a00;"></div>
<div style="left:583px;top:479px;width:1px;height:8px;background:#f00000;"></div>
<div style="left:547px;top:489px;width:30px;height:14px;overflow:hidden;"><div class="t" style="left:-1.500px;top:0;font-size:10px;color:#c8c8c8;letter-spacing:-.5px">0:00s</div></div>
<div class="t" style="left:666px;top:489px;font-size:10px;color:#c8c8c8;letter-spacing:-.5px;">05s</div>
<div class="t" style="left:785.5px;top:489px;font-size:10px;color:#c8c8c8;letter-spacing:-.5px;">10s</div>
<div class="t" style="left:905.5px;top:489px;font-size:10px;color:#c8c8c8;letter-spacing:-.5px;">15s</div>
<div class="t" style="left:1025px;top:489px;font-size:10px;color:#c8c8c8;letter-spacing:-.5px;">20s</div>
<div style="left:554px;top:500px;width:1px;height:7px;background:#b0b0b0;"></div>
<div style="left:674px;top:500px;width:1px;height:7px;background:#b0b0b0;"></div>
<div style="left:793px;top:500px;width:1px;height:7px;background:#b0b0b0;"></div>
<div style="left:913px;top:500px;width:1px;height:7px;background:#b0b0b0;"></div>
<div style="left:1033px;top:500px;width:1px;height:7px;background:#b0b0b0;"></div>
<div style="left:547px;top:507px;width:587px;height:17px;background:#777;border:1px solid #1e1e1e;box-sizing:border-box;"></div>
<div style="left:548px;top:508px;width:6px;height:15px;background:#d9a11c;"></div>
<div style="left:550px;top:510px;width:1px;height:11px;background:#6a4a00;"></div>
<div style="left:552px;top:510px;width:1px;height:11px;background:#6a4a00;"></div>
<div style="left:1127px;top:508px;width:6px;height:15px;background:#d9a11c;"></div>
<div style="left:1129px;top:510px;width:1px;height:11px;background:#6a4a00;"></div>
<div style="left:1131px;top:510px;width:1px;height:11px;background:#6a4a00;"></div>
<svg style="left:1136px;top:508px;" width="13" height="15" viewBox="0 0 13 15"><path d="M.5 .5h12v8l-6 6-6-6z" fill="#9a9a9a" stroke="#ddd" stroke-width=".8"/></svg>
<div style="left:547px;top:525px;width:588px;height:2px;background:#2e2e2e;"></div>
<div style="left:547px;top:527px;width:588px;height:164px;background:#4f4f4f;"></div>
<div style="left:547px;top:527px;width:588px;height:34px;background:#484848;"></div>
<div style="left:547px;top:527px;width:7px;height:164px;background:#3e3e3e;"></div>
<div style="left:547px;top:544px;width:588px;height:1px;background:#3c3c3c;"></div>
<div style="left:547px;top:561px;width:588px;height:1px;background:#404040;"></div>
<div style="left:13px;top:544px;width:533px;height:1px;background:#343434;"></div>
<div style="left:554px;top:529px;width:572px;height:15px;background:#7d715b;border-radius:4px 0 0 0;border-top:1px solid #948970;box-sizing:border-box;"></div>
<div style="left:1127px;top:529px;width:8px;height:15px;background:#424242;"></div>
<div style="left:1127px;top:547px;width:6px;height:16px;background:#8a7e66;"></div>
<div style="left:583px;top:488px;width:1px;height:203px;background:#f00000;"></div>
<svg style="left:577px;top:492px;" width="13" height="15" viewBox="0 0 13 15"><path d="M3.500 .5h6c2.500 0 3.500 2 3 5-.5 3-2.500 5.500-4.500 7.500l-1.500 1.500-1.500-1.500c-2-2-4-4.500-4.500-7.500-.5-3 .5-5 3-5z" fill="#e8b31c" stroke="#8a6a00" stroke-width=".8"/><path d="M4.500 3.500v2.500M6.500 3.500v8M8.500 3.500v2.500M5 7h3" stroke="#5a4300" stroke-width="1" fill="none"/></svg>
<div style="left:582px;top:526px;width:2px;height:1px;background:#2fbf2f;"></div>
<div style="left:1134px;top:525px;width:17px;height:166px;background:#363636;border-left:1px solid #2a2a2a;box-sizing:border-box;"></div>
<svg style="left:1137px;top:528px;" width="13" height="14" viewBox="0 0 13 14"><circle cx="5.500" cy="5" r="4.500" fill="none" stroke="#d8d8d8" stroke-width="1.200"/><path d="M5 6.500l-4.500 7h9z" fill="#d8d8d8"/><rect x="6.500" y="5.500" width="6" height="6" fill="#424242" stroke="#d8d8d8"/></svg>
<svg style="left:1138px;top:548px;" width="10" height="7" viewBox="0 0 10 7"><path d="M0 7l5-7 5 7z" fill="#5c5c5c"/></svg>
<svg style="left:1138px;top:678px;" width="10" height="7" viewBox="0 0 10 7"><path d="M0 0l5 7 5-7z" fill="#5c5c5c"/></svg>
</body></html>
